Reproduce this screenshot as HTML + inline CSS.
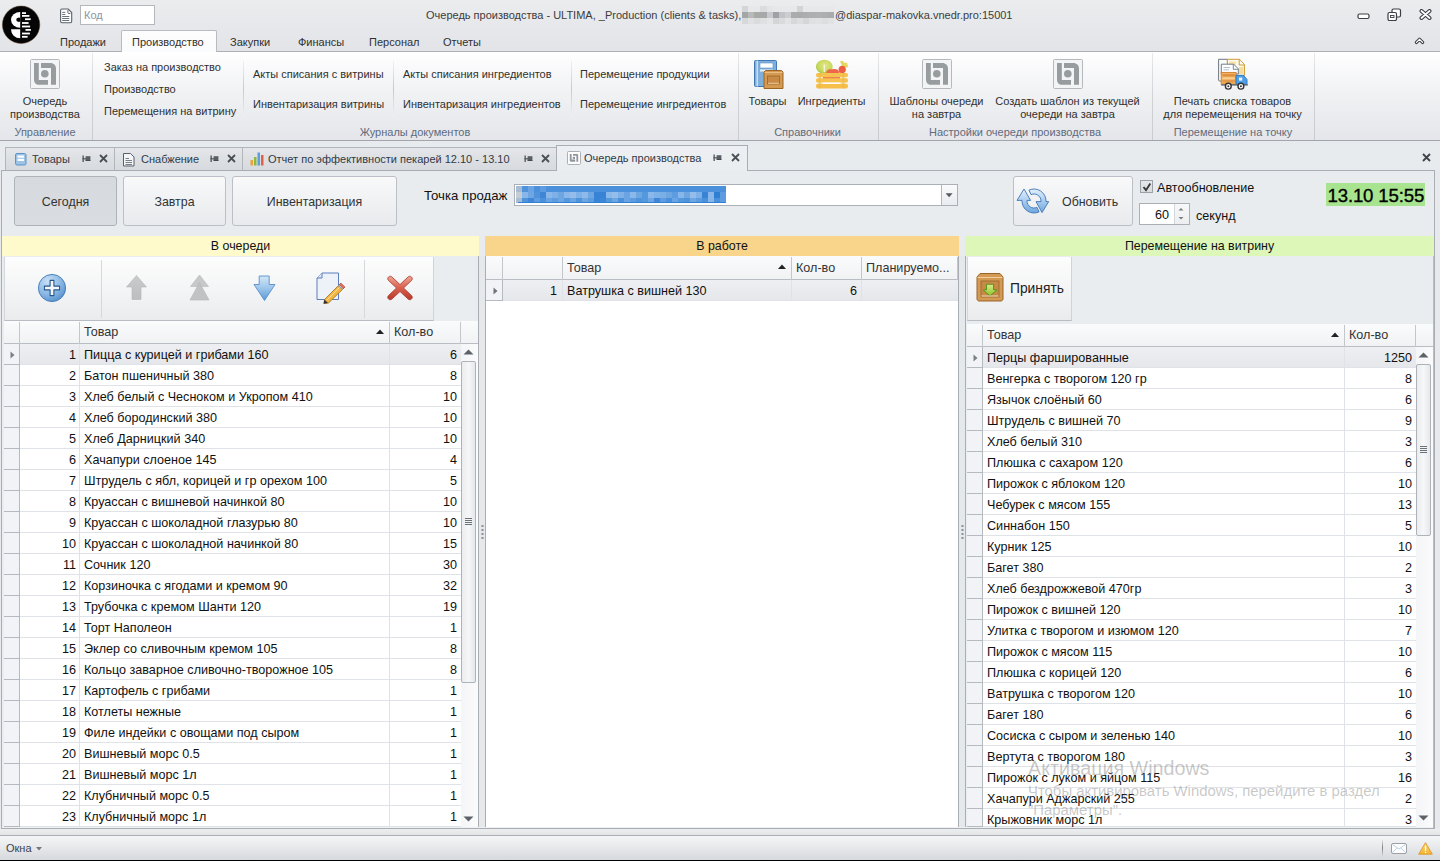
<!DOCTYPE html><html><head><meta charset="utf-8"><style>
html,body{margin:0;padding:0;}
body{width:1440px;height:861px;overflow:hidden;position:relative;font-family:"Liberation Sans", sans-serif;background:#e7e9ec;}
div{box-sizing:border-box;}
</style></head><body>
<div style="position:absolute;left:0px;top:0px;width:1440px;height:52px;background:linear-gradient(#eaecee,#e2e4e8);"></div>
<div style="position:absolute;left:0px;top:51px;width:1440px;height:1px;background:#acb0b6;"></div>
<svg style="position:absolute;left:0px;top:0px" width="44" height="48" viewBox="0 0 44 48"><circle cx="21.1" cy="24.75" r="18.7" fill="#050505" stroke="#5a3e22" stroke-width="0.5"/>
<path d="M20.2 11.9 A9.2 7.95 0 0 0 20.2 27.8 Z" fill="#fff"/>
<circle cx="18.3" cy="19.7" r="2" fill="#050505"/><rect x="18.3" y="17.7" width="2" height="4" fill="#050505"/>
<path d="M20.2 29.3 H11 A9.2 9 0 0 0 20.2 38.3 Z" fill="#fff"/>
<g fill="#fff"><rect x="22" y="12.2" width="4" height="1.8"/><rect x="22" y="15" width="7.4" height="1.8"/><rect x="25" y="18.3" width="5.7" height="1.8"/><rect x="22" y="22.1" width="6.6" height="1.8"/><rect x="22" y="25.6" width="8.1" height="1.8"/><rect x="25.5" y="29" width="5.4" height="1.8"/><rect x="22" y="32.6" width="7.9" height="1.8"/><rect x="22" y="35.9" width="5.6" height="1.8"/></g></svg>
<svg style="position:absolute;left:59px;top:7.6px" width="14" height="16" viewBox="0 0 14 16"><path d="M1.6 2.4 Q1.6 1 3 1 H9.2 L12.7 4.5 V13.3 Q12.7 14.7 11.3 14.7 H3 Q1.6 14.7 1.6 13.3 Z" fill="#fff" stroke="#59616a" stroke-width="1.1"/>
<path d="M8.9 2.2 V4.6 Q8.9 5.5 9.8 5.5 H11.3" fill="none" stroke="#59616a" stroke-width="1"/>
<g stroke="#6a737c" stroke-width="1"><line x1="3.2" y1="4.4" x2="6.3" y2="4.4"/><line x1="3.2" y1="6.5" x2="6.3" y2="6.5"/><line x1="3.2" y1="8.5" x2="10.3" y2="8.5"/><line x1="3.2" y1="10.5" x2="10.3" y2="10.5"/><line x1="3.2" y1="12.5" x2="10.3" y2="12.5"/></g></svg>
<div style="position:absolute;left:80px;top:5px;width:75px;height:20px;background:#fff;border:1px solid #b4b8be;"></div>
<div style="position:absolute;left:84px;top:9.04px;font-size:11px;color:#8c94a6;white-space:nowrap;line-height:normal;">Код</div>
<div style="position:absolute;left:426px;top:9.04px;font-size:11px;color:#3c3c3c;white-space:nowrap;line-height:normal;">Очередь производства - ULTIMA, _Production (clients &amp; tasks), </div>
<div style="position:absolute;left:742.00px;top:6.2px;width:6.43px;height:5.8px;background:#d3d5d7"></div>
<div style="position:absolute;left:748.13px;top:6.2px;width:6.43px;height:5.8px;background:#e6e8ea"></div>
<div style="position:absolute;left:754.27px;top:6.2px;width:6.43px;height:5.8px;background:#e6e8ea"></div>
<div style="position:absolute;left:760.40px;top:6.2px;width:6.43px;height:5.8px;background:#dadcdd"></div>
<div style="position:absolute;left:766.53px;top:6.2px;width:6.43px;height:5.8px;background:#e3e5e7"></div>
<div style="position:absolute;left:772.67px;top:6.2px;width:6.43px;height:5.8px;background:#e6e8ea"></div>
<div style="position:absolute;left:778.80px;top:6.2px;width:6.43px;height:5.8px;background:#e6e8ea"></div>
<div style="position:absolute;left:784.93px;top:6.2px;width:6.43px;height:5.8px;background:#e6e8ea"></div>
<div style="position:absolute;left:791.07px;top:6.2px;width:6.43px;height:5.8px;background:#e6e8ea"></div>
<div style="position:absolute;left:797.20px;top:6.2px;width:6.43px;height:5.8px;background:#d2d4d5"></div>
<div style="position:absolute;left:803.33px;top:6.2px;width:6.43px;height:5.8px;background:#e6e8ea"></div>
<div style="position:absolute;left:809.47px;top:6.2px;width:6.43px;height:5.8px;background:#e6e8ea"></div>
<div style="position:absolute;left:815.60px;top:6.2px;width:6.43px;height:5.8px;background:#e6e8ea"></div>
<div style="position:absolute;left:821.73px;top:6.2px;width:6.43px;height:5.8px;background:#e6e8ea"></div>
<div style="position:absolute;left:827.87px;top:6.2px;width:6.43px;height:5.8px;background:#e6e8ea"></div>
<div style="position:absolute;left:742.00px;top:12px;width:6.43px;height:5.9px;background:#a3a5a7"></div>
<div style="position:absolute;left:748.13px;top:12px;width:6.43px;height:5.9px;background:#b7b9bb"></div>
<div style="position:absolute;left:754.27px;top:12px;width:6.43px;height:5.9px;background:#a9aaa5"></div>
<div style="position:absolute;left:760.40px;top:12px;width:6.43px;height:5.9px;background:#a6a8aa"></div>
<div style="position:absolute;left:766.53px;top:12px;width:6.43px;height:5.9px;background:#c6c9ce"></div>
<div style="position:absolute;left:772.67px;top:12px;width:6.43px;height:5.9px;background:#9fa1a4"></div>
<div style="position:absolute;left:778.80px;top:12px;width:6.43px;height:5.9px;background:#c0c4c8"></div>
<div style="position:absolute;left:784.93px;top:12px;width:6.43px;height:5.9px;background:#cbced0"></div>
<div style="position:absolute;left:791.07px;top:12px;width:6.43px;height:5.9px;background:#aaacae"></div>
<div style="position:absolute;left:797.20px;top:12px;width:6.43px;height:5.9px;background:#a9abad"></div>
<div style="position:absolute;left:803.33px;top:12px;width:6.43px;height:5.9px;background:#abadaf"></div>
<div style="position:absolute;left:809.47px;top:12px;width:6.43px;height:5.9px;background:#adafb1"></div>
<div style="position:absolute;left:815.60px;top:12px;width:6.43px;height:5.9px;background:#aeb0b2"></div>
<div style="position:absolute;left:821.73px;top:12px;width:6.43px;height:5.9px;background:#acaeb0"></div>
<div style="position:absolute;left:827.87px;top:12px;width:6.43px;height:5.9px;background:#a9abad"></div>
<div style="position:absolute;left:742.00px;top:17.9px;width:6.43px;height:5.8px;background:#d6d8da"></div>
<div style="position:absolute;left:748.13px;top:17.9px;width:6.43px;height:5.8px;background:#dfe1e3"></div>
<div style="position:absolute;left:754.27px;top:17.9px;width:6.43px;height:5.8px;background:#d9dbdd"></div>
<div style="position:absolute;left:760.40px;top:17.9px;width:6.43px;height:5.8px;background:#dee0e2"></div>
<div style="position:absolute;left:766.53px;top:17.9px;width:6.43px;height:5.8px;background:#e3e5e7"></div>
<div style="position:absolute;left:772.67px;top:17.9px;width:6.43px;height:5.8px;background:#d3d5d7"></div>
<div style="position:absolute;left:778.80px;top:17.9px;width:6.43px;height:5.8px;background:#d9dbdd"></div>
<div style="position:absolute;left:784.93px;top:17.9px;width:6.43px;height:5.8px;background:#e1e3e5"></div>
<div style="position:absolute;left:791.07px;top:17.9px;width:6.43px;height:5.8px;background:#d6d8da"></div>
<div style="position:absolute;left:797.20px;top:17.9px;width:6.43px;height:5.8px;background:#dcdee0"></div>
<div style="position:absolute;left:803.33px;top:17.9px;width:6.43px;height:5.8px;background:#d4d6d8"></div>
<div style="position:absolute;left:809.47px;top:17.9px;width:6.43px;height:5.8px;background:#dee0e2"></div>
<div style="position:absolute;left:815.60px;top:17.9px;width:6.43px;height:5.8px;background:#e0e2e4"></div>
<div style="position:absolute;left:821.73px;top:17.9px;width:6.43px;height:5.8px;background:#dcdee0"></div>
<div style="position:absolute;left:827.87px;top:17.9px;width:6.43px;height:5.8px;background:#e0e2e4"></div>
<div style="position:absolute;left:835px;top:9.04px;font-size:11px;color:#3c3c3c;white-space:nowrap;line-height:normal;">@diaspar-makovka.vnedr.pro:15001</div>
<svg style="position:absolute;left:1357px;top:13px" width="13" height="7" viewBox="0 0 13 7"><rect x="1" y="1" width="11" height="4.5" rx="1.5" fill="#fff" stroke="#3a3f45" stroke-width="1.2"/></svg>
<svg style="position:absolute;left:1387px;top:8px" width="15" height="13" viewBox="0 0 15 13"><rect x="5" y="1" width="8.5" height="8" rx="1.5" fill="#fff" stroke="#3a3f45" stroke-width="1.2"/><rect x="1" y="4.5" width="8.5" height="8" rx="1.5" fill="#fff" stroke="#3a3f45" stroke-width="1.2"/><rect x="3.5" y="7.5" width="3.5" height="2" fill="none" stroke="#3a3f45" stroke-width="0.9"/></svg>
<svg style="position:absolute;left:1419px;top:9px" width="13" height="11" viewBox="0 0 13 11"><path d="M2.5 2 L6.5 5.5 L10.5 2 M2.5 9 L6.5 5.5 L10.5 9" stroke="#3a3f45" stroke-width="4" stroke-linecap="round" stroke-linejoin="round" fill="none"/><path d="M2.5 2 L6.5 5.5 L10.5 2 M2.5 9 L6.5 5.5 L10.5 9" stroke="#fff" stroke-width="1.8" stroke-linecap="round" fill="none"/></svg>
<svg style="position:absolute;left:1414px;top:36px" width="11" height="9" viewBox="0 0 11 9"><path d="M2.4 6.4 L5.5 3.3 L8.6 6.4" stroke="#3a3f45" stroke-width="3.3" stroke-linecap="round" stroke-linejoin="round" fill="none"/><path d="M2.4 6.4 L5.5 3.3 L8.6 6.4" stroke="#fff" stroke-width="1.2" stroke-linecap="round" fill="none"/></svg>
<div style="position:absolute;left:121px;top:30px;width:96px;height:23px;background:linear-gradient(#fdfdfd,#fafbfc);border:1px solid #b8bcc2;border-bottom:none;border-radius:2px 2px 0 0;"></div>
<div style="position:absolute;left:60px;top:36.05px;font-size:11px;color:#303030;white-space:nowrap;line-height:normal;">Продажи</div>
<div style="position:absolute;left:132px;top:36.05px;font-size:11px;color:#303030;white-space:nowrap;line-height:normal;">Производство</div>
<div style="position:absolute;left:230px;top:36.05px;font-size:11px;color:#303030;white-space:nowrap;line-height:normal;">Закупки</div>
<div style="position:absolute;left:298px;top:36.05px;font-size:11px;color:#303030;white-space:nowrap;line-height:normal;">Финансы</div>
<div style="position:absolute;left:369px;top:36.05px;font-size:11px;color:#303030;white-space:nowrap;line-height:normal;">Персонал</div>
<div style="position:absolute;left:443px;top:36.05px;font-size:11px;color:#303030;white-space:nowrap;line-height:normal;">Отчеты</div>
<div style="position:absolute;left:0px;top:52px;width:1440px;height:89px;background:linear-gradient(#ffffff 0%,#fbfbfc 12%,#f1f2f4 45%,#e9ebee 75%,#e4e6e9 100%);"></div>
<div style="position:absolute;left:0px;top:140px;width:1440px;height:1px;background:#a2a6ac;"></div>
<div style="position:absolute;left:92px;top:53px;width:1px;height:87px;background:linear-gradient(#e6e8ea,#cfd3d7 50%,#c8ccd1);"></div>
<div style="position:absolute;left:738px;top:53px;width:1px;height:87px;background:linear-gradient(#e6e8ea,#cfd3d7 50%,#c8ccd1);"></div>
<div style="position:absolute;left:878px;top:53px;width:1px;height:87px;background:linear-gradient(#e6e8ea,#cfd3d7 50%,#c8ccd1);"></div>
<div style="position:absolute;left:1152px;top:53px;width:1px;height:87px;background:linear-gradient(#e6e8ea,#cfd3d7 50%,#c8ccd1);"></div>
<div style="position:absolute;left:1314px;top:53px;width:1px;height:87px;background:linear-gradient(#e6e8ea,#cfd3d7 50%,#c8ccd1);"></div>
<svg style="position:absolute;left:30px;top:59px" width="30" height="30" viewBox="0 0 30 30"><rect x="0.5" y="0.5" width="29" height="29" rx="1" fill="#f3f4f5" stroke="#b5b9be"/>
<path d="M4 4 H8.8 V21 H18 V25.8 H9 C6 25.8 4 23.8 4 20.5 Z" fill="#979c9f"/>
<path d="M11 4 H20.5 C23.5 4 26 6.3 26 9.5 V25.8 H21 V9 H11 Z" fill="#979c9f"/>
<circle cx="14.8" cy="14.8" r="3.8" fill="#979c9f"/></svg>
<div style="position:absolute;left:-255px;width:600px;top:95.05px;font-size:11px;color:#303030;white-space:nowrap;line-height:normal;text-align:center;">Очередь</div>
<div style="position:absolute;left:-255px;width:600px;top:108.05px;font-size:11px;color:#303030;white-space:nowrap;line-height:normal;text-align:center;">производства</div>
<div style="position:absolute;left:-255px;width:600px;top:126.05px;font-size:11px;color:#5f6b7e;white-space:nowrap;line-height:normal;text-align:center;">Управление</div>
<div style="position:absolute;left:104px;top:61.05px;font-size:11px;color:#303030;white-space:nowrap;line-height:normal;">Заказ на производство</div>
<div style="position:absolute;left:104px;top:83.05px;font-size:11px;color:#303030;white-space:nowrap;line-height:normal;">Производство</div>
<div style="position:absolute;left:104px;top:105.05px;font-size:11px;color:#303030;white-space:nowrap;line-height:normal;">Перемещения на витрину</div>
<div style="position:absolute;left:243px;top:61px;width:1px;height:56px;background:linear-gradient(#f0f1f2,#c5c9cd 50%,#f0f1f2);"></div>
<div style="position:absolute;left:253px;top:68.05px;font-size:11px;color:#303030;white-space:nowrap;line-height:normal;">Акты списания с витрины</div>
<div style="position:absolute;left:253px;top:98.05px;font-size:11px;color:#303030;white-space:nowrap;line-height:normal;">Инвентаризация витрины</div>
<div style="position:absolute;left:393px;top:61px;width:1px;height:56px;background:linear-gradient(#f0f1f2,#c5c9cd 50%,#f0f1f2);"></div>
<div style="position:absolute;left:403px;top:68.05px;font-size:11px;color:#303030;white-space:nowrap;line-height:normal;">Акты списания ингредиентов</div>
<div style="position:absolute;left:403px;top:98.05px;font-size:11px;color:#303030;white-space:nowrap;line-height:normal;">Инвентаризация ингредиентов</div>
<div style="position:absolute;left:571px;top:61px;width:1px;height:56px;background:linear-gradient(#f0f1f2,#c5c9cd 50%,#f0f1f2);"></div>
<div style="position:absolute;left:580px;top:68.05px;font-size:11px;color:#303030;white-space:nowrap;line-height:normal;">Перемещение продукции</div>
<div style="position:absolute;left:580px;top:98.05px;font-size:11px;color:#303030;white-space:nowrap;line-height:normal;">Перемещение ингредиентов</div>
<div style="position:absolute;left:115px;width:600px;top:126.05px;font-size:11px;color:#5f6b7e;white-space:nowrap;line-height:normal;text-align:center;">Журналы документов</div>
<svg style="position:absolute;left:753px;top:59px" width="31" height="31" viewBox="0 0 31 31"><rect x="1.5" y="1.5" width="22" height="26" rx="1" fill="#7fb0dc" stroke="#3f78b5"/>
<rect x="3.5" y="1.5" width="1.5" height="26" fill="#c9def2"/>
<rect x="7" y="4" width="13" height="5" fill="#fff" stroke="#5b90c6" stroke-width="0.6"/>
<rect x="7" y="10.5" width="13" height="2" fill="#e7f0f9"/>
<path d="M11 13 L12.5 11.5 H28.5 L30 13 V29.5 H11 Z" fill="#d49a52" stroke="#9c6526"/>
<rect x="14.5" y="17" width="12" height="8" fill="#c98a45" stroke="#9c6526" stroke-width="0.8"/>
<line x1="15" y1="24.3" x2="26" y2="24.3" stroke="#f7e3c2" stroke-width="0.8"/>
<line x1="11.5" y1="13.5" x2="29.5" y2="13.5" stroke="#f0c890" stroke-width="0.8"/></svg>
<svg style="position:absolute;left:812px;top:56px" width="40" height="36" viewBox="0 0 40 36"><defs><radialGradient id="cab" cx="0.55" cy="0.4" r="0.7"><stop offset="0" stop-color="#e3e58a"/><stop offset="0.6" stop-color="#c8d95c"/><stop offset="1" stop-color="#8fbd3c"/></radialGradient></defs>
<ellipse cx="12.3" cy="10.8" rx="8.4" ry="7" fill="url(#cab)"/>
<rect x="11.6" y="8.5" width="1.4" height="7.5" fill="#f4f5dc"/>
<path d="M28 5.5 C30 4 32 5 32 7 C34 5.5 36 7 35.5 9 C37 10 36 12 34 11.5 L31 12 Z" fill="#e5d760"/>
<path d="M14 17.5 C14.5 14 17 12.8 19 13.5 C21 12.5 24 13 26 14 L28 17.5 Z" fill="#ee6749"/>
<ellipse cx="30.2" cy="13.5" rx="3.6" ry="3.8" fill="#ec5d44"/>
<rect x="11" y="20" width="17" height="3" fill="#ef6b4b"/>
<rect x="4" y="17" width="32" height="4.2" rx="1.6" fill="#f6c250"/>
<rect x="4" y="22.2" width="32" height="4.4" rx="1.6" fill="#f6c250"/>
<rect x="4" y="27.8" width="32" height="4.6" rx="1.8" fill="#f5bf4a"/>
<rect x="11" y="26.6" width="17" height="1.2" fill="#ffffff"/>
<rect x="6.5" y="17" width="2.5" height="15.4" fill="#eeb844" opacity="0.6"/><rect x="30" y="17" width="2.5" height="15.4" fill="#eeb844" opacity="0.6"/></svg>
<div style="position:absolute;left:467.5px;width:600px;top:95.05px;font-size:11px;color:#303030;white-space:nowrap;line-height:normal;text-align:center;">Товары</div>
<div style="position:absolute;left:531.5px;width:600px;top:95.05px;font-size:11px;color:#303030;white-space:nowrap;line-height:normal;text-align:center;">Ингредиенты</div>
<div style="position:absolute;left:507.5px;width:600px;top:126.05px;font-size:11px;color:#5f6b7e;white-space:nowrap;line-height:normal;text-align:center;">Справочники</div>
<svg style="position:absolute;left:922px;top:59px" width="30" height="30" viewBox="0 0 30 30"><rect x="0.5" y="0.5" width="29" height="29" rx="1" fill="#f3f4f5" stroke="#b5b9be"/>
<path d="M4 4 H8.8 V21 H18 V25.8 H9 C6 25.8 4 23.8 4 20.5 Z" fill="#979c9f"/>
<path d="M11 4 H20.5 C23.5 4 26 6.3 26 9.5 V25.8 H21 V9 H11 Z" fill="#979c9f"/>
<circle cx="14.8" cy="14.8" r="3.8" fill="#979c9f"/></svg>
<svg style="position:absolute;left:1053px;top:59px" width="30" height="30" viewBox="0 0 30 30"><rect x="0.5" y="0.5" width="29" height="29" rx="1" fill="#f3f4f5" stroke="#b5b9be"/>
<path d="M4 4 H8.8 V21 H18 V25.8 H9 C6 25.8 4 23.8 4 20.5 Z" fill="#979c9f"/>
<path d="M11 4 H20.5 C23.5 4 26 6.3 26 9.5 V25.8 H21 V9 H11 Z" fill="#979c9f"/>
<circle cx="14.8" cy="14.8" r="3.8" fill="#979c9f"/></svg>
<div style="position:absolute;left:636.5px;width:600px;top:95.05px;font-size:11px;color:#303030;white-space:nowrap;line-height:normal;text-align:center;">Шаблоны очереди</div>
<div style="position:absolute;left:636.5px;width:600px;top:108.05px;font-size:11px;color:#303030;white-space:nowrap;line-height:normal;text-align:center;">на завтра</div>
<div style="position:absolute;left:767.5px;width:600px;top:95.05px;font-size:11px;color:#303030;white-space:nowrap;line-height:normal;text-align:center;">Создать шаблон из текущей</div>
<div style="position:absolute;left:767.5px;width:600px;top:108.05px;font-size:11px;color:#303030;white-space:nowrap;line-height:normal;text-align:center;">очереди на завтра</div>
<div style="position:absolute;left:715px;width:600px;top:126.05px;font-size:11px;color:#5f6b7e;white-space:nowrap;line-height:normal;text-align:center;">Настройки очереди производства</div>
<svg style="position:absolute;left:1210px;top:55px" width="45" height="37" viewBox="0 0 45 37"><path d="M8.6 4.3 H17.5 V26 H9.5 C9 26 8.6 25.6 8.6 25 Z" fill="#fafbfc" stroke="#5f6670" stroke-width="0.9"/>
<path d="M17.3 4.3 H29.5 L34.4 9.4 V20.5 H17.3 Z" fill="#fffaf0" stroke="#c7901e" stroke-width="0.9"/>
<path d="M29.2 4.6 V10 H34.2" fill="none" stroke="#c7901e" stroke-width="0.9"/>
<rect x="19" y="6.5" width="7" height="3.5" fill="#fbe2a6"/>
<rect x="29" y="12" width="4.5" height="7" fill="#f8dc9c"/>
<path d="M11.3 9.2 H23.7 L28.3 13.8 V19 H11.3 Z" fill="#ffffff" stroke="#5d6d80" stroke-width="0.9"/>
<path d="M23.3 9.5 V14.3 H28" fill="none" stroke="#5d6d80" stroke-width="0.8"/>
<g stroke="#9ab0c8" stroke-width="0.8"><line x1="13.5" y1="12.5" x2="20" y2="12.5"/><line x1="13.5" y1="14.8" x2="19" y2="14.8"/></g>
<rect x="11.2" y="17.4" width="14.8" height="11.8" fill="#f2b463" stroke="#cf7d2a" stroke-width="0.9"/>
<rect x="12.5" y="19.2" width="12.2" height="2.2" fill="#dc8c3c"/>
<rect x="12.5" y="22.5" width="12.2" height="1.6" fill="#f7d09a"/>
<rect x="12.5" y="25" width="12.2" height="2.5" fill="#e49848"/>
<path d="M26 20.3 H33.5 L37 24.5 V29.4 H26 Z" fill="#4f9fe6" stroke="#2a74c0" stroke-width="0.9"/>
<rect x="29" y="22.6" width="3.2" height="3" fill="#eef6fd"/>
<rect x="11.2" y="29.2" width="26.6" height="1.4" fill="#5d6570"/>
<circle cx="18.3" cy="31.2" r="2.9" fill="#fff" stroke="#333" stroke-width="1.4"/><circle cx="18.3" cy="31.2" r="1" fill="#333"/>
<circle cx="30.9" cy="31.2" r="2.9" fill="#fff" stroke="#333" stroke-width="1.4"/><circle cx="30.9" cy="31.2" r="1" fill="#333"/></svg>
<div style="position:absolute;left:932.5px;width:600px;top:95.05px;font-size:11px;color:#303030;white-space:nowrap;line-height:normal;text-align:center;">Печать списка товаров</div>
<div style="position:absolute;left:932.5px;width:600px;top:108.05px;font-size:11px;color:#303030;white-space:nowrap;line-height:normal;text-align:center;">для перемещения на точку</div>
<div style="position:absolute;left:933px;width:600px;top:126.05px;font-size:11px;color:#5f6b7e;white-space:nowrap;line-height:normal;text-align:center;">Перемещение на точку</div>
<div style="position:absolute;left:0px;top:141px;width:1440px;height:30px;background:#e8ebee;"></div>
<div style="position:absolute;left:5px;top:147px;width:110px;height:24px;background:linear-gradient(#e4e6e9,#d6d9dd);border:1px solid #b1b6bc;border-bottom:none;"></div>
<div style="position:absolute;left:114px;top:147px;width:129px;height:24px;background:linear-gradient(#e4e6e9,#d6d9dd);border:1px solid #b1b6bc;border-bottom:none;"></div>
<div style="position:absolute;left:242px;top:147px;width:315px;height:24px;background:linear-gradient(#e4e6e9,#d6d9dd);border:1px solid #b1b6bc;border-bottom:none;"></div>
<div style="position:absolute;left:556px;top:145px;width:192px;height:27px;background:linear-gradient(#edeff2,#eaedf0);border:1px solid #a9aeb5;border-bottom:none;"></div>
<svg style="position:absolute;left:15px;top:153px" width="12" height="13" viewBox="0 0 12 13"><rect x="0.5" y="0.5" width="10.5" height="11.5" rx="1.5" fill="#9cc3e6" stroke="#5d93c8"/><rect x="2.5" y="2.5" width="6.5" height="2.2" fill="#fff"/><rect x="2.5" y="5.8" width="6.5" height="2.2" fill="#fff"/></svg>
<div style="position:absolute;left:32px;top:153.04px;font-size:11px;color:#303a48;white-space:nowrap;line-height:normal;">Товары</div>
<svg style="position:absolute;left:123px;top:153px" width="12" height="14" viewBox="0 0 12 14"><path d="M0.5 0.5 H7.5 L11 4 V13 H0.5 Z" fill="#f4f5f6" stroke="#5a6068"/><g stroke="#6a7078" stroke-width="0.9"><line x1="2.5" y1="5.5" x2="6" y2="5.5"/><line x1="2.5" y1="7.5" x2="9" y2="7.5"/><line x1="2.5" y1="9.5" x2="9" y2="9.5"/><line x1="2.5" y1="11.5" x2="9" y2="11.5"/></g></svg>
<div style="position:absolute;left:141px;top:153.04px;font-size:11px;color:#303a48;white-space:nowrap;line-height:normal;">Снабжение</div>
<svg style="position:absolute;left:250px;top:152px" width="15" height="14" viewBox="0 0 15 14"><rect x="0.5" y="8" width="2.5" height="5.5" fill="#f0a040"/><rect x="4" y="5" width="2.5" height="8.5" fill="#8fb840"/><rect x="7.5" y="0.5" width="2.5" height="13" fill="#5aa0e0"/><rect x="11" y="3" width="2.5" height="10.5" fill="#e0604a"/></svg>
<div style="position:absolute;left:268px;top:153.04px;font-size:11px;color:#303a48;white-space:nowrap;line-height:normal;">Отчет по эффективности пекарей 12.10 - 13.10</div>
<svg style="position:absolute;left:567px;top:151px" width="14" height="14" viewBox="0 0 14 14"><rect x="0.5" y="0.5" width="13" height="13" rx="1" fill="#fdfdfd" stroke="#aab0b5"/><path d="M2.8 3 H4.6 V8.6 H8.2 V10.8 H4 C3.3 10.8 2.8 10.3 2.8 9.6 Z" fill="#8f969b"/><path d="M6 3 H10 C10.7 3 11.2 3.5 11.2 4.2 V10.8 H9.4 V4.8 H6 Z" fill="#8f969b"/><rect x="5.8" y="5.8" width="2.2" height="2.2" fill="#8f969b"/></svg>
<div style="position:absolute;left:584px;top:152.04px;font-size:11px;color:#303a48;white-space:nowrap;line-height:normal;">Очередь производства</div>
<svg style="position:absolute;left:82px;top:155px" width="9" height="8" viewBox="0 0 9 8"><rect x="0.5" y="0.5" width="1.3" height="6.5" fill="#4f545a"/><rect x="0.5" y="3.2" width="3.5" height="1.2" fill="#4f545a"/><rect x="3.6" y="1.2" width="4.8" height="4.6" fill="#5a5f66"/><rect x="3.6" y="5" width="4.8" height="0.9" fill="#3f444a"/></svg>
<svg style="position:absolute;left:99px;top:154px" width="9" height="9" viewBox="0 0 9 9"><path d="M1 1 L8 8 M8 1 L1 8" stroke="#4a4f55" stroke-width="1.8"/></svg>
<svg style="position:absolute;left:210px;top:155px" width="9" height="8" viewBox="0 0 9 8"><rect x="0.5" y="0.5" width="1.3" height="6.5" fill="#4f545a"/><rect x="0.5" y="3.2" width="3.5" height="1.2" fill="#4f545a"/><rect x="3.6" y="1.2" width="4.8" height="4.6" fill="#5a5f66"/><rect x="3.6" y="5" width="4.8" height="0.9" fill="#3f444a"/></svg>
<svg style="position:absolute;left:227px;top:154px" width="9" height="9" viewBox="0 0 9 9"><path d="M1 1 L8 8 M8 1 L1 8" stroke="#4a4f55" stroke-width="1.8"/></svg>
<svg style="position:absolute;left:524px;top:155px" width="9" height="8" viewBox="0 0 9 8"><rect x="0.5" y="0.5" width="1.3" height="6.5" fill="#4f545a"/><rect x="0.5" y="3.2" width="3.5" height="1.2" fill="#4f545a"/><rect x="3.6" y="1.2" width="4.8" height="4.6" fill="#5a5f66"/><rect x="3.6" y="5" width="4.8" height="0.9" fill="#3f444a"/></svg>
<svg style="position:absolute;left:541px;top:154px" width="9" height="9" viewBox="0 0 9 9"><path d="M1 1 L8 8 M8 1 L1 8" stroke="#4a4f55" stroke-width="1.8"/></svg>
<svg style="position:absolute;left:713px;top:154px" width="9" height="8" viewBox="0 0 9 8"><rect x="0.5" y="0.5" width="1.3" height="6.5" fill="#4f545a"/><rect x="0.5" y="3.2" width="3.5" height="1.2" fill="#4f545a"/><rect x="3.6" y="1.2" width="4.8" height="4.6" fill="#5a5f66"/><rect x="3.6" y="5" width="4.8" height="0.9" fill="#3f444a"/></svg>
<svg style="position:absolute;left:731px;top:153px" width="9" height="9" viewBox="0 0 9 9"><path d="M1 1 L8 8 M8 1 L1 8" stroke="#4a4f55" stroke-width="1.8"/></svg>
<svg style="position:absolute;left:1422px;top:153px" width="9" height="9" viewBox="0 0 9 9"><path d="M1 1 L8 8 M8 1 L1 8" stroke="#3f444a" stroke-width="1.8"/></svg>
<div style="position:absolute;left:1px;top:170px;width:1434px;height:659px;background:#e9ecef;border:1px solid #a9aeb5;"></div>
<div style="position:absolute;left:557px;top:170px;width:190px;height:1px;background:#eaedf0;"></div>
<div style="position:absolute;left:14px;top:176px;width:103px;height:50px;background:linear-gradient(#d6d9dd,#d9dce0);border:1px solid #aeb3b9;border-radius:3px;"></div>
<div style="position:absolute;left:123px;top:176px;width:103px;height:50px;background:linear-gradient(#f9f9fa,#eef0f2 60%,#e8eaed);border:1px solid #bcc0c6;border-radius:3px;"></div>
<div style="position:absolute;left:232px;top:176px;width:165px;height:50px;background:linear-gradient(#f9f9fa,#eef0f2 60%,#e8eaed);border:1px solid #bcc0c6;border-radius:3px;"></div>
<div style="position:absolute;left:-234.5px;width:600px;top:194.78px;font-size:12.4px;color:#333;white-space:nowrap;line-height:normal;text-align:center;">Сегодня</div>
<div style="position:absolute;left:-125.5px;width:600px;top:194.78px;font-size:12.4px;color:#333;white-space:nowrap;line-height:normal;text-align:center;">Завтра</div>
<div style="position:absolute;left:14.5px;width:600px;top:194.78px;font-size:12.4px;color:#333;white-space:nowrap;line-height:normal;text-align:center;">Инвентаризация</div>
<div style="position:absolute;left:424px;top:188.05px;font-size:13.2px;color:#111;white-space:nowrap;line-height:normal;">Точка продаж</div>
<div style="position:absolute;left:514px;top:184px;width:444px;height:22px;background:#fff;border:1px solid #abb0b6;"></div>
<div style="position:absolute;left:941px;top:185px;width:16px;height:20px;background:linear-gradient(#fafbfc,#e9ecef);border-left:1px solid #b3b8be;"></div>
<svg style="position:absolute;left:945px;top:193px" width="9" height="5" viewBox="0 0 9 5"><path d="M0.6 0.3 H7.6 L4.1 4.2 Z" fill="#555a61"/></svg>
<div style="position:absolute;left:516.00px;top:186px;width:6.30px;height:5.5px;background:#a8bdd3"></div>
<div style="position:absolute;left:522.00px;top:186px;width:6.30px;height:5.5px;background:#4f93db"></div>
<div style="position:absolute;left:528.00px;top:186px;width:6.30px;height:5.5px;background:#6aa4e3"></div>
<div style="position:absolute;left:534.00px;top:186px;width:6.30px;height:5.5px;background:#4a90da"></div>
<div style="position:absolute;left:540.00px;top:186px;width:6.30px;height:5.5px;background:#5d9ce0"></div>
<div style="position:absolute;left:546.00px;top:186px;width:6.30px;height:5.5px;background:#4a90da"></div>
<div style="position:absolute;left:552.00px;top:186px;width:6.30px;height:5.5px;background:#4a90da"></div>
<div style="position:absolute;left:558.00px;top:186px;width:6.30px;height:5.5px;background:#4a90da"></div>
<div style="position:absolute;left:564.00px;top:186px;width:6.30px;height:5.5px;background:#4a90da"></div>
<div style="position:absolute;left:570.00px;top:186px;width:6.30px;height:5.5px;background:#4a90da"></div>
<div style="position:absolute;left:576.00px;top:186px;width:6.30px;height:5.5px;background:#4a90da"></div>
<div style="position:absolute;left:582.00px;top:186px;width:6.30px;height:5.5px;background:#4a90da"></div>
<div style="position:absolute;left:588.00px;top:186px;width:6.30px;height:5.5px;background:#4a90da"></div>
<div style="position:absolute;left:594.00px;top:186px;width:6.30px;height:5.5px;background:#4a90da"></div>
<div style="position:absolute;left:600.00px;top:186px;width:6.30px;height:5.5px;background:#4a90da"></div>
<div style="position:absolute;left:606.00px;top:186px;width:6.30px;height:5.5px;background:#4a90da"></div>
<div style="position:absolute;left:612.00px;top:186px;width:6.30px;height:5.5px;background:#4a90da"></div>
<div style="position:absolute;left:618.00px;top:186px;width:6.30px;height:5.5px;background:#4a90da"></div>
<div style="position:absolute;left:624.00px;top:186px;width:6.30px;height:5.5px;background:#4a90da"></div>
<div style="position:absolute;left:630.00px;top:186px;width:6.30px;height:5.5px;background:#4a90da"></div>
<div style="position:absolute;left:636.00px;top:186px;width:6.30px;height:5.5px;background:#4a90da"></div>
<div style="position:absolute;left:642.00px;top:186px;width:6.30px;height:5.5px;background:#4a90da"></div>
<div style="position:absolute;left:648.00px;top:186px;width:6.30px;height:5.5px;background:#4a90da"></div>
<div style="position:absolute;left:654.00px;top:186px;width:6.30px;height:5.5px;background:#4a90da"></div>
<div style="position:absolute;left:660.00px;top:186px;width:6.30px;height:5.5px;background:#4a90da"></div>
<div style="position:absolute;left:666.00px;top:186px;width:6.30px;height:5.5px;background:#4a90da"></div>
<div style="position:absolute;left:672.00px;top:186px;width:6.30px;height:5.5px;background:#4a90da"></div>
<div style="position:absolute;left:678.00px;top:186px;width:6.30px;height:5.5px;background:#4a90da"></div>
<div style="position:absolute;left:684.00px;top:186px;width:6.30px;height:5.5px;background:#4a90da"></div>
<div style="position:absolute;left:690.00px;top:186px;width:6.30px;height:5.5px;background:#4a90da"></div>
<div style="position:absolute;left:696.00px;top:186px;width:6.30px;height:5.5px;background:#4a90da"></div>
<div style="position:absolute;left:702.00px;top:186px;width:6.30px;height:5.5px;background:#4a90da"></div>
<div style="position:absolute;left:708.00px;top:186px;width:6.30px;height:5.5px;background:#4a90da"></div>
<div style="position:absolute;left:714.00px;top:186px;width:6.30px;height:5.5px;background:#4a90da"></div>
<div style="position:absolute;left:720.00px;top:186px;width:6.30px;height:5.5px;background:#4a90da"></div>
<div style="position:absolute;left:516.00px;top:191.5px;width:6.30px;height:6px;background:#c4ccd4"></div>
<div style="position:absolute;left:522.00px;top:191.5px;width:6.30px;height:6px;background:#86b6ea"></div>
<div style="position:absolute;left:528.00px;top:191.5px;width:6.30px;height:6px;background:#6ea6e2"></div>
<div style="position:absolute;left:534.00px;top:191.5px;width:6.30px;height:6px;background:#4f93db"></div>
<div style="position:absolute;left:540.00px;top:191.5px;width:6.30px;height:6px;background:#3f87d6"></div>
<div style="position:absolute;left:546.00px;top:191.5px;width:6.30px;height:6px;background:#8ab8ea"></div>
<div style="position:absolute;left:552.00px;top:191.5px;width:6.30px;height:6px;background:#7eb1e8"></div>
<div style="position:absolute;left:558.00px;top:191.5px;width:6.30px;height:6px;background:#6ea6e2"></div>
<div style="position:absolute;left:564.00px;top:191.5px;width:6.30px;height:6px;background:#8ab8ea"></div>
<div style="position:absolute;left:570.00px;top:191.5px;width:6.30px;height:6px;background:#94bdec"></div>
<div style="position:absolute;left:576.00px;top:191.5px;width:6.30px;height:6px;background:#7eb1e8"></div>
<div style="position:absolute;left:582.00px;top:191.5px;width:6.30px;height:6px;background:#8ebaeb"></div>
<div style="position:absolute;left:588.00px;top:191.5px;width:6.30px;height:6px;background:#6ea6e2"></div>
<div style="position:absolute;left:594.00px;top:191.5px;width:6.30px;height:6px;background:#3783d5"></div>
<div style="position:absolute;left:600.00px;top:191.5px;width:6.30px;height:6px;background:#3783d5"></div>
<div style="position:absolute;left:606.00px;top:191.5px;width:6.30px;height:6px;background:#8ab8ea"></div>
<div style="position:absolute;left:612.00px;top:191.5px;width:6.30px;height:6px;background:#94bdec"></div>
<div style="position:absolute;left:618.00px;top:191.5px;width:6.30px;height:6px;background:#7eb1e8"></div>
<div style="position:absolute;left:624.00px;top:191.5px;width:6.30px;height:6px;background:#6aa4e3"></div>
<div style="position:absolute;left:630.00px;top:191.5px;width:6.30px;height:6px;background:#8ab8ea"></div>
<div style="position:absolute;left:636.00px;top:191.5px;width:6.30px;height:6px;background:#6ea6e2"></div>
<div style="position:absolute;left:642.00px;top:191.5px;width:6.30px;height:6px;background:#5399dd"></div>
<div style="position:absolute;left:648.00px;top:191.5px;width:6.30px;height:6px;background:#8ab8ea"></div>
<div style="position:absolute;left:654.00px;top:191.5px;width:6.30px;height:6px;background:#7eb1e8"></div>
<div style="position:absolute;left:660.00px;top:191.5px;width:6.30px;height:6px;background:#7aaee7"></div>
<div style="position:absolute;left:666.00px;top:191.5px;width:6.30px;height:6px;background:#6ea6e2"></div>
<div style="position:absolute;left:672.00px;top:191.5px;width:6.30px;height:6px;background:#5d9ce0"></div>
<div style="position:absolute;left:678.00px;top:191.5px;width:6.30px;height:6px;background:#86b6ea"></div>
<div style="position:absolute;left:684.00px;top:191.5px;width:6.30px;height:6px;background:#6ea6e2"></div>
<div style="position:absolute;left:690.00px;top:191.5px;width:6.30px;height:6px;background:#94bdec"></div>
<div style="position:absolute;left:696.00px;top:191.5px;width:6.30px;height:6px;background:#7eb1e8"></div>
<div style="position:absolute;left:702.00px;top:191.5px;width:6.30px;height:6px;background:#3783d5"></div>
<div style="position:absolute;left:708.00px;top:191.5px;width:6.30px;height:6px;background:#8ab8ea"></div>
<div style="position:absolute;left:714.00px;top:191.5px;width:6.30px;height:6px;background:#2f7fd3"></div>
<div style="position:absolute;left:720.00px;top:191.5px;width:6.30px;height:6px;background:#5d9ce0"></div>
<div style="position:absolute;left:516.00px;top:197.5px;width:6.30px;height:5.3px;background:#a8bdd3"></div>
<div style="position:absolute;left:522.00px;top:197.5px;width:6.30px;height:5.3px;background:#4f93db"></div>
<div style="position:absolute;left:528.00px;top:197.5px;width:6.30px;height:5.3px;background:#3f87d6"></div>
<div style="position:absolute;left:534.00px;top:197.5px;width:6.30px;height:5.3px;background:#5d9ce0"></div>
<div style="position:absolute;left:540.00px;top:197.5px;width:6.30px;height:5.3px;background:#4a90da"></div>
<div style="position:absolute;left:546.00px;top:197.5px;width:6.30px;height:5.3px;background:#6aa4e3"></div>
<div style="position:absolute;left:552.00px;top:197.5px;width:6.30px;height:5.3px;background:#5d9ce0"></div>
<div style="position:absolute;left:558.00px;top:197.5px;width:6.30px;height:5.3px;background:#6ea6e2"></div>
<div style="position:absolute;left:564.00px;top:197.5px;width:6.30px;height:5.3px;background:#5399dd"></div>
<div style="position:absolute;left:570.00px;top:197.5px;width:6.30px;height:5.3px;background:#6aa4e3"></div>
<div style="position:absolute;left:576.00px;top:197.5px;width:6.30px;height:5.3px;background:#4f93db"></div>
<div style="position:absolute;left:582.00px;top:197.5px;width:6.30px;height:5.3px;background:#6ea6e2"></div>
<div style="position:absolute;left:588.00px;top:197.5px;width:6.30px;height:5.3px;background:#5d9ce0"></div>
<div style="position:absolute;left:594.00px;top:197.5px;width:6.30px;height:5.3px;background:#3783d5"></div>
<div style="position:absolute;left:600.00px;top:197.5px;width:6.30px;height:5.3px;background:#3f87d6"></div>
<div style="position:absolute;left:606.00px;top:197.5px;width:6.30px;height:5.3px;background:#5399dd"></div>
<div style="position:absolute;left:612.00px;top:197.5px;width:6.30px;height:5.3px;background:#6ea6e2"></div>
<div style="position:absolute;left:618.00px;top:197.5px;width:6.30px;height:5.3px;background:#4a90da"></div>
<div style="position:absolute;left:624.00px;top:197.5px;width:6.30px;height:5.3px;background:#6aa4e3"></div>
<div style="position:absolute;left:630.00px;top:197.5px;width:6.30px;height:5.3px;background:#5d9ce0"></div>
<div style="position:absolute;left:636.00px;top:197.5px;width:6.30px;height:5.3px;background:#4f93db"></div>
<div style="position:absolute;left:642.00px;top:197.5px;width:6.30px;height:5.3px;background:#5399dd"></div>
<div style="position:absolute;left:648.00px;top:197.5px;width:6.30px;height:5.3px;background:#6ea6e2"></div>
<div style="position:absolute;left:654.00px;top:197.5px;width:6.30px;height:5.3px;background:#3f87d6"></div>
<div style="position:absolute;left:660.00px;top:197.5px;width:6.30px;height:5.3px;background:#5d9ce0"></div>
<div style="position:absolute;left:666.00px;top:197.5px;width:6.30px;height:5.3px;background:#4a90da"></div>
<div style="position:absolute;left:672.00px;top:197.5px;width:6.30px;height:5.3px;background:#6aa4e3"></div>
<div style="position:absolute;left:678.00px;top:197.5px;width:6.30px;height:5.3px;background:#5399dd"></div>
<div style="position:absolute;left:684.00px;top:197.5px;width:6.30px;height:5.3px;background:#4f93db"></div>
<div style="position:absolute;left:690.00px;top:197.5px;width:6.30px;height:5.3px;background:#6ea6e2"></div>
<div style="position:absolute;left:696.00px;top:197.5px;width:6.30px;height:5.3px;background:#5d9ce0"></div>
<div style="position:absolute;left:702.00px;top:197.5px;width:6.30px;height:5.3px;background:#4a90da"></div>
<div style="position:absolute;left:708.00px;top:197.5px;width:6.30px;height:5.3px;background:#86b6ea"></div>
<div style="position:absolute;left:714.00px;top:197.5px;width:6.30px;height:5.3px;background:#4a90da"></div>
<div style="position:absolute;left:720.00px;top:197.5px;width:6.30px;height:5.3px;background:#5d9ce0"></div>
<div style="position:absolute;left:518px;top:202px;width:208px;height:1px;background:#2f7fd3;"></div>
<div style="position:absolute;left:1013px;top:176px;width:120px;height:50px;background:linear-gradient(#f9f9fa,#eef0f2 60%,#e8eaed);border:1px solid #bcc0c6;border-radius:3px;"></div>
<svg style="position:absolute;left:1016px;top:187px" width="34" height="28" viewBox="0 0 34 28"><defs><linearGradient id="rg" x1="0" y1="0" x2="0" y2="1"><stop offset="0" stop-color="#e2f0fb"/><stop offset="0.5" stop-color="#a9cdef"/><stop offset="1" stop-color="#6fa6dc"/></linearGradient></defs>
<path d="M1 13.4 L8 2 L14.6 13.4 L11 13.4 L11 14 A7 7 0 0 0 20.96 20.34 L23.07 24.88 A12 12 0 0 1 6 14 L6 13.4 Z" fill="url(#rg)" stroke="#3f74b8" stroke-width="0.9" stroke-linejoin="round"/>
<path d="M32.7 14.6 L26 25.6 L20 14.6 L25 14.6 L25 14 A7 7 0 0 0 15.04 7.66 L12.93 3.12 A12 12 0 0 1 30 14 L30 14.6 Z" fill="url(#rg)" stroke="#3f74b8" stroke-width="0.9" stroke-linejoin="round"/></svg>
<div style="position:absolute;left:1062px;top:194.78px;font-size:12.4px;color:#333;white-space:nowrap;line-height:normal;">Обновить</div>
<div style="position:absolute;left:1140px;top:180px;width:13px;height:13px;background:linear-gradient(#e6e8eb,#d9dcdf);border:1px solid #9ca1a8;"></div>
<svg style="position:absolute;left:1142px;top:182px" width="10" height="10" viewBox="0 0 10 10"><path d="M1.5 5 L4 8.2 L8.3 1.5" stroke="#3a3a3a" stroke-width="1.9" fill="none"/></svg>
<div style="position:absolute;left:1157px;top:180.60px;font-size:12.6px;color:#111;white-space:nowrap;line-height:normal;">Автообновление</div>
<div style="position:absolute;left:1139px;top:203px;width:51px;height:22px;background:#fff;border:1px solid #abb0b6;"></div>
<div style="position:absolute;left:1174px;top:204px;width:15px;height:20px;background:linear-gradient(#f7f8f9,#eceef0);border-left:1px solid #d3d6da;"></div>
<svg style="position:absolute;left:1177px;top:207px" width="8" height="14" viewBox="0 0 8 14"><path d="M1.5 3.5 L4 1 L6.5 3.5 Z" fill="#7a7e84"/><path d="M1.5 10 L4 12.5 L6.5 10 Z" fill="#7a7e84"/></svg>
<div style="position:absolute;right:271px;top:207.60px;font-size:12.6px;color:#111;white-space:nowrap;line-height:normal;text-align:right;">60</div>
<div style="position:absolute;left:1196px;top:208.60px;font-size:12.6px;color:#111;white-space:nowrap;line-height:normal;">секунд</div>
<div style="position:absolute;left:1326px;top:183px;width:99px;height:23px;background:#a8e48f;"></div>
<div style="position:absolute;left:1327.5px;top:185.17px;font-size:18.6px;color:#000;white-space:nowrap;line-height:normal;-webkit-text-stroke:0.35px #000;letter-spacing:-0.15px">13.10 15:55</div>
<div style="position:absolute;left:2px;top:236px;width:477px;height:20px;background:#fffacc;"></div>
<div style="position:absolute;left:-59.5px;width:600px;top:238.78px;font-size:12.4px;color:#111;white-space:nowrap;line-height:normal;text-align:center;">В очереди</div>
<div style="position:absolute;left:485px;top:236px;width:474px;height:20px;background:#f9d48b;"></div>
<div style="position:absolute;left:422px;width:600px;top:238.78px;font-size:12.4px;color:#111;white-space:nowrap;line-height:normal;text-align:center;">В работе</div>
<div style="position:absolute;left:965px;top:236px;width:469px;height:20px;background:#ddf7b9;"></div>
<div style="position:absolute;left:899.5px;width:600px;top:238.78px;font-size:12.4px;color:#111;white-space:nowrap;line-height:normal;text-align:center;">Перемещение на витрину</div>
<div style="position:absolute;left:479px;top:256px;width:7px;height:572px;background:#e6e9ec;"></div>
<div style="position:absolute;left:958px;top:256px;width:7px;height:572px;background:#e6e9ec;"></div>
<div style="position:absolute;left:2px;top:256px;width:477px;height:572px;background:#eaedf0;"></div>
<div style="position:absolute;left:486px;top:256px;width:472px;height:572px;background:#fff;"></div>
<div style="position:absolute;left:966px;top:256px;width:468px;height:572px;background:#eaedf0;"></div>
<div style="position:absolute;left:478px;top:256px;width:1px;height:572px;background:#a9aeb5;"></div>
<div style="position:absolute;left:485px;top:256px;width:1px;height:572px;background:#a9aeb5;"></div>
<div style="position:absolute;left:958px;top:256px;width:1px;height:572px;background:#a9aeb5;"></div>
<div style="position:absolute;left:965px;top:256px;width:1px;height:572px;background:#a9aeb5;"></div>
<div style="position:absolute;left:2px;top:827px;width:1432px;height:1px;background:#eef0f2;"></div>
<div style="position:absolute;left:1433px;top:256px;width:1px;height:572px;background:#b9bdc3;"></div>
<div style="position:absolute;left:4px;top:257px;width:430px;height:64px;background:linear-gradient(#fdfdfd,#f3f4f5 55%,#eaebed);border-left:1px solid #d3d6da;border-right:1px solid #d0d3d7;border-bottom:1px solid #b9bdc3;"></div>
<div style="position:absolute;left:101px;top:260px;width:1px;height:58px;background:#d6d9dc;"></div>
<div style="position:absolute;left:364px;top:260px;width:1px;height:58px;background:#d6d9dc;"></div>
<svg style="position:absolute;left:37px;top:273px" width="30" height="30" viewBox="0 0 30 30"><defs><radialGradient id="pg" cx="0.35" cy="0.25" r="0.85"><stop offset="0" stop-color="#c9e0f5"/><stop offset="0.6" stop-color="#86b5e3"/><stop offset="1" stop-color="#4f8ac8"/></radialGradient></defs>
<circle cx="15" cy="15" r="13.6" fill="url(#pg)" stroke="#3f78b5" stroke-width="0.9"/>
<path d="M13.1 7.4 H16.9 V13.1 H22.6 V16.9 H16.9 V22.6 H13.1 V16.9 H7.4 V13.1 H13.1 Z" fill="#f4f7fa" stroke="#27578f" stroke-width="1.1" stroke-linejoin="round"/></svg>
<svg style="position:absolute;left:125px;top:275px" width="23" height="25" viewBox="0 0 23 25"><defs><linearGradient id="ag" x1="0" y1="0" x2="0" y2="1"><stop offset="0" stop-color="#c9cbcc"/><stop offset="1" stop-color="#bcbfc0"/></linearGradient></defs><path d="M11.5 0.5 L21.5 12 H16 V24.5 H7 V12 H1.5 Z" fill="url(#ag)" stroke="#b3b6b8" stroke-width="0.6"/></svg>
<svg style="position:absolute;left:189px;top:274px" width="21" height="27" viewBox="0 0 21 27"><path d="M10.5 1 L19.5 12.5 H1.5 Z" fill="#c6c8c9" stroke="#b6b9ba" stroke-width="0.6"/><path d="M10.5 8.5 L20 26 H1 Z" fill="#c0c2c3" stroke="#b3b6b7" stroke-width="0.6"/></svg>
<svg style="position:absolute;left:253px;top:275px" width="23" height="27" viewBox="0 0 23 27"><defs><linearGradient id="dg" x1="0" y1="0" x2="0" y2="1"><stop offset="0" stop-color="#d4e7f7"/><stop offset="0.5" stop-color="#9cc6ec"/><stop offset="1" stop-color="#5a98d4"/></linearGradient></defs>
<path d="M6.2 1 H16.2 V9.5 H22 L11.5 25.5 L1 9.5 H6.2 Z" fill="url(#dg)" stroke="#5a8fca" stroke-width="0.9" stroke-linejoin="round"/></svg>
<svg style="position:absolute;left:315px;top:271px" width="31" height="34" viewBox="0 0 31 34"><path d="M2 7 L7 2 H23.5 V28.5 H2 Z" fill="#edf2f9" stroke="#5a7fbf" stroke-width="1"/>
<path d="M2 7 H7 V2" fill="#dfe7f3" stroke="#5a7fbf" stroke-width="1"/>
<path d="M9.5 28.5 L25.5 12.5 L29.5 16.5 L13.5 32 L9 32.5 Z" fill="#f3b640" stroke="#a36a1a" stroke-width="0.8"/>
<path d="M11.5 29.5 L27 14" stroke="#fce0a0" stroke-width="1"/>
<path d="M24.5 13.5 L28.5 17.5 L30 16 L26 12 Z" fill="#e07070" stroke="#a04040" stroke-width="0.5"/>
<path d="M23.5 14.5 L27.5 18.5" stroke="#8aa0c0" stroke-width="1.2"/>
<path d="M9.5 28.5 L13 32 L8.5 32.8 Z" fill="#333"/></svg>
<svg style="position:absolute;left:386px;top:274px" width="28" height="28" viewBox="0 0 28 28"><defs><linearGradient id="xg" x1="0" y1="0" x2="0" y2="1"><stop offset="0" stop-color="#eea595"/><stop offset="0.5" stop-color="#d9604e"/><stop offset="1" stop-color="#b83a2c"/></linearGradient></defs>
<path d="M6 3 L14 10.5 L22 3 C23 2 24.5 2 25.5 3 C26.5 4 26.5 5.5 25.5 6.5 L17.5 14 L25.5 21.5 C26.5 22.5 26.5 24 25.5 25 C24.5 26 23 26 22 25 L14 17.5 L6 25 C5 26 3.5 26 2.5 25 C1.5 24 1.5 22.5 2.5 21.5 L10.5 14 L2.5 6.5 C1.5 5.5 1.5 4 2.5 3 C3.5 2 5 2 6 3 Z" fill="url(#xg)" stroke="#a8392c" stroke-width="0.8"/></svg>
<div style="position:absolute;left:4px;top:321px;width:474px;height:23px;background:linear-gradient(#fafbfc,#f0f2f4);border-bottom:1px solid #b9bec4;"></div>
<div style="position:absolute;left:19px;top:322px;width:1px;height:22px;background:#c3c7cc;"></div>
<div style="position:absolute;left:79px;top:322px;width:1px;height:22px;background:#c3c7cc;"></div>
<div style="position:absolute;left:389px;top:322px;width:1px;height:22px;background:#c3c7cc;"></div>
<div style="position:absolute;left:84px;top:324.60px;font-size:12.6px;color:#333;white-space:nowrap;line-height:normal;">Товар</div>
<div style="position:absolute;left:460px;top:322px;width:1px;height:22px;background:#c3c7cc;"></div>
<div style="position:absolute;left:394px;top:324.60px;font-size:12.6px;color:#333;white-space:nowrap;line-height:normal;">Кол-во</div>
<svg style="position:absolute;left:376px;top:329px" width="8" height="5" viewBox="0 0 8 5"><path d="M0 5 L4 0.5 L8 5 Z" fill="#222"/></svg>
<div style="position:absolute;left:4px;top:344px;width:16px;height:21px;background:#f1f3f6;border-bottom:1px solid #b5bac1;border-right:1px solid #b5bac1;"></div>
<div style="position:absolute;left:20px;top:344px;width:441px;height:21px;background:linear-gradient(#eeeff2,#e6e7ea);border-bottom:1px solid #dfe2e6;"></div>
<div style="position:absolute;left:79px;top:344px;width:1px;height:21px;background:#dfe2e6;"></div>
<div style="position:absolute;left:389px;top:344px;width:1px;height:21px;background:#dfe2e6;"></div>
<div style="position:absolute;right:1364px;top:348.10px;font-size:12.6px;color:#111;white-space:nowrap;line-height:normal;text-align:right;">1</div>
<div style="position:absolute;left:84px;top:348.10px;font-size:12.6px;color:#111;white-space:nowrap;line-height:normal;">Пицца с курицей и грибами 160</div>
<div style="position:absolute;right:983px;top:348.10px;font-size:12.6px;color:#111;white-space:nowrap;line-height:normal;text-align:right;">6</div>
<svg style="position:absolute;left:10px;top:351px" width="5" height="8" viewBox="0 0 5 8"><path d="M0.5 0.5 L4.5 4 L0.5 7.5 Z" fill="#7a7f86"/></svg>
<div style="position:absolute;left:4px;top:365px;width:16px;height:21px;background:#f1f3f6;border-bottom:1px solid #b5bac1;border-right:1px solid #b5bac1;"></div>
<div style="position:absolute;left:20px;top:365px;width:441px;height:21px;background:#fff;border-bottom:1px solid #dfe2e6;"></div>
<div style="position:absolute;left:79px;top:365px;width:1px;height:21px;background:#dfe2e6;"></div>
<div style="position:absolute;left:389px;top:365px;width:1px;height:21px;background:#dfe2e6;"></div>
<div style="position:absolute;right:1364px;top:369.10px;font-size:12.6px;color:#111;white-space:nowrap;line-height:normal;text-align:right;">2</div>
<div style="position:absolute;left:84px;top:369.10px;font-size:12.6px;color:#111;white-space:nowrap;line-height:normal;">Батон пшеничный 380</div>
<div style="position:absolute;right:983px;top:369.10px;font-size:12.6px;color:#111;white-space:nowrap;line-height:normal;text-align:right;">8</div>
<div style="position:absolute;left:4px;top:386px;width:16px;height:21px;background:#f1f3f6;border-bottom:1px solid #b5bac1;border-right:1px solid #b5bac1;"></div>
<div style="position:absolute;left:20px;top:386px;width:441px;height:21px;background:#fff;border-bottom:1px solid #dfe2e6;"></div>
<div style="position:absolute;left:79px;top:386px;width:1px;height:21px;background:#dfe2e6;"></div>
<div style="position:absolute;left:389px;top:386px;width:1px;height:21px;background:#dfe2e6;"></div>
<div style="position:absolute;right:1364px;top:390.10px;font-size:12.6px;color:#111;white-space:nowrap;line-height:normal;text-align:right;">3</div>
<div style="position:absolute;left:84px;top:390.10px;font-size:12.6px;color:#111;white-space:nowrap;line-height:normal;">Хлеб белый с Чесноком и Укропом 410</div>
<div style="position:absolute;right:983px;top:390.10px;font-size:12.6px;color:#111;white-space:nowrap;line-height:normal;text-align:right;">10</div>
<div style="position:absolute;left:4px;top:407px;width:16px;height:21px;background:#f1f3f6;border-bottom:1px solid #b5bac1;border-right:1px solid #b5bac1;"></div>
<div style="position:absolute;left:20px;top:407px;width:441px;height:21px;background:#fff;border-bottom:1px solid #dfe2e6;"></div>
<div style="position:absolute;left:79px;top:407px;width:1px;height:21px;background:#dfe2e6;"></div>
<div style="position:absolute;left:389px;top:407px;width:1px;height:21px;background:#dfe2e6;"></div>
<div style="position:absolute;right:1364px;top:411.10px;font-size:12.6px;color:#111;white-space:nowrap;line-height:normal;text-align:right;">4</div>
<div style="position:absolute;left:84px;top:411.10px;font-size:12.6px;color:#111;white-space:nowrap;line-height:normal;">Хлеб бородинский 380</div>
<div style="position:absolute;right:983px;top:411.10px;font-size:12.6px;color:#111;white-space:nowrap;line-height:normal;text-align:right;">10</div>
<div style="position:absolute;left:4px;top:428px;width:16px;height:21px;background:#f1f3f6;border-bottom:1px solid #b5bac1;border-right:1px solid #b5bac1;"></div>
<div style="position:absolute;left:20px;top:428px;width:441px;height:21px;background:#fff;border-bottom:1px solid #dfe2e6;"></div>
<div style="position:absolute;left:79px;top:428px;width:1px;height:21px;background:#dfe2e6;"></div>
<div style="position:absolute;left:389px;top:428px;width:1px;height:21px;background:#dfe2e6;"></div>
<div style="position:absolute;right:1364px;top:432.10px;font-size:12.6px;color:#111;white-space:nowrap;line-height:normal;text-align:right;">5</div>
<div style="position:absolute;left:84px;top:432.10px;font-size:12.6px;color:#111;white-space:nowrap;line-height:normal;">Хлеб Дарницкий 340</div>
<div style="position:absolute;right:983px;top:432.10px;font-size:12.6px;color:#111;white-space:nowrap;line-height:normal;text-align:right;">10</div>
<div style="position:absolute;left:4px;top:449px;width:16px;height:21px;background:#f1f3f6;border-bottom:1px solid #b5bac1;border-right:1px solid #b5bac1;"></div>
<div style="position:absolute;left:20px;top:449px;width:441px;height:21px;background:#fff;border-bottom:1px solid #dfe2e6;"></div>
<div style="position:absolute;left:79px;top:449px;width:1px;height:21px;background:#dfe2e6;"></div>
<div style="position:absolute;left:389px;top:449px;width:1px;height:21px;background:#dfe2e6;"></div>
<div style="position:absolute;right:1364px;top:453.10px;font-size:12.6px;color:#111;white-space:nowrap;line-height:normal;text-align:right;">6</div>
<div style="position:absolute;left:84px;top:453.10px;font-size:12.6px;color:#111;white-space:nowrap;line-height:normal;">Хачапури слоеное 145</div>
<div style="position:absolute;right:983px;top:453.10px;font-size:12.6px;color:#111;white-space:nowrap;line-height:normal;text-align:right;">4</div>
<div style="position:absolute;left:4px;top:470px;width:16px;height:21px;background:#f1f3f6;border-bottom:1px solid #b5bac1;border-right:1px solid #b5bac1;"></div>
<div style="position:absolute;left:20px;top:470px;width:441px;height:21px;background:#fff;border-bottom:1px solid #dfe2e6;"></div>
<div style="position:absolute;left:79px;top:470px;width:1px;height:21px;background:#dfe2e6;"></div>
<div style="position:absolute;left:389px;top:470px;width:1px;height:21px;background:#dfe2e6;"></div>
<div style="position:absolute;right:1364px;top:474.10px;font-size:12.6px;color:#111;white-space:nowrap;line-height:normal;text-align:right;">7</div>
<div style="position:absolute;left:84px;top:474.10px;font-size:12.6px;color:#111;white-space:nowrap;line-height:normal;">Штрудель с ябл, корицей и гр орехом 100</div>
<div style="position:absolute;right:983px;top:474.10px;font-size:12.6px;color:#111;white-space:nowrap;line-height:normal;text-align:right;">5</div>
<div style="position:absolute;left:4px;top:491px;width:16px;height:21px;background:#f1f3f6;border-bottom:1px solid #b5bac1;border-right:1px solid #b5bac1;"></div>
<div style="position:absolute;left:20px;top:491px;width:441px;height:21px;background:#fff;border-bottom:1px solid #dfe2e6;"></div>
<div style="position:absolute;left:79px;top:491px;width:1px;height:21px;background:#dfe2e6;"></div>
<div style="position:absolute;left:389px;top:491px;width:1px;height:21px;background:#dfe2e6;"></div>
<div style="position:absolute;right:1364px;top:495.10px;font-size:12.6px;color:#111;white-space:nowrap;line-height:normal;text-align:right;">8</div>
<div style="position:absolute;left:84px;top:495.10px;font-size:12.6px;color:#111;white-space:nowrap;line-height:normal;">Круассан с вишневой начинкой 80</div>
<div style="position:absolute;right:983px;top:495.10px;font-size:12.6px;color:#111;white-space:nowrap;line-height:normal;text-align:right;">10</div>
<div style="position:absolute;left:4px;top:512px;width:16px;height:21px;background:#f1f3f6;border-bottom:1px solid #b5bac1;border-right:1px solid #b5bac1;"></div>
<div style="position:absolute;left:20px;top:512px;width:441px;height:21px;background:#fff;border-bottom:1px solid #dfe2e6;"></div>
<div style="position:absolute;left:79px;top:512px;width:1px;height:21px;background:#dfe2e6;"></div>
<div style="position:absolute;left:389px;top:512px;width:1px;height:21px;background:#dfe2e6;"></div>
<div style="position:absolute;right:1364px;top:516.10px;font-size:12.6px;color:#111;white-space:nowrap;line-height:normal;text-align:right;">9</div>
<div style="position:absolute;left:84px;top:516.10px;font-size:12.6px;color:#111;white-space:nowrap;line-height:normal;">Круассан с шоколадной глазурью 80</div>
<div style="position:absolute;right:983px;top:516.10px;font-size:12.6px;color:#111;white-space:nowrap;line-height:normal;text-align:right;">10</div>
<div style="position:absolute;left:4px;top:533px;width:16px;height:21px;background:#f1f3f6;border-bottom:1px solid #b5bac1;border-right:1px solid #b5bac1;"></div>
<div style="position:absolute;left:20px;top:533px;width:441px;height:21px;background:#fff;border-bottom:1px solid #dfe2e6;"></div>
<div style="position:absolute;left:79px;top:533px;width:1px;height:21px;background:#dfe2e6;"></div>
<div style="position:absolute;left:389px;top:533px;width:1px;height:21px;background:#dfe2e6;"></div>
<div style="position:absolute;right:1364px;top:537.10px;font-size:12.6px;color:#111;white-space:nowrap;line-height:normal;text-align:right;">10</div>
<div style="position:absolute;left:84px;top:537.10px;font-size:12.6px;color:#111;white-space:nowrap;line-height:normal;">Круассан с шоколадной начинкой 80</div>
<div style="position:absolute;right:983px;top:537.10px;font-size:12.6px;color:#111;white-space:nowrap;line-height:normal;text-align:right;">15</div>
<div style="position:absolute;left:4px;top:554px;width:16px;height:21px;background:#f1f3f6;border-bottom:1px solid #b5bac1;border-right:1px solid #b5bac1;"></div>
<div style="position:absolute;left:20px;top:554px;width:441px;height:21px;background:#fff;border-bottom:1px solid #dfe2e6;"></div>
<div style="position:absolute;left:79px;top:554px;width:1px;height:21px;background:#dfe2e6;"></div>
<div style="position:absolute;left:389px;top:554px;width:1px;height:21px;background:#dfe2e6;"></div>
<div style="position:absolute;right:1364px;top:558.10px;font-size:12.6px;color:#111;white-space:nowrap;line-height:normal;text-align:right;">11</div>
<div style="position:absolute;left:84px;top:558.10px;font-size:12.6px;color:#111;white-space:nowrap;line-height:normal;">Сочник 120</div>
<div style="position:absolute;right:983px;top:558.10px;font-size:12.6px;color:#111;white-space:nowrap;line-height:normal;text-align:right;">30</div>
<div style="position:absolute;left:4px;top:575px;width:16px;height:21px;background:#f1f3f6;border-bottom:1px solid #b5bac1;border-right:1px solid #b5bac1;"></div>
<div style="position:absolute;left:20px;top:575px;width:441px;height:21px;background:#fff;border-bottom:1px solid #dfe2e6;"></div>
<div style="position:absolute;left:79px;top:575px;width:1px;height:21px;background:#dfe2e6;"></div>
<div style="position:absolute;left:389px;top:575px;width:1px;height:21px;background:#dfe2e6;"></div>
<div style="position:absolute;right:1364px;top:579.10px;font-size:12.6px;color:#111;white-space:nowrap;line-height:normal;text-align:right;">12</div>
<div style="position:absolute;left:84px;top:579.10px;font-size:12.6px;color:#111;white-space:nowrap;line-height:normal;">Корзиночка с ягодами и кремом 90</div>
<div style="position:absolute;right:983px;top:579.10px;font-size:12.6px;color:#111;white-space:nowrap;line-height:normal;text-align:right;">32</div>
<div style="position:absolute;left:4px;top:596px;width:16px;height:21px;background:#f1f3f6;border-bottom:1px solid #b5bac1;border-right:1px solid #b5bac1;"></div>
<div style="position:absolute;left:20px;top:596px;width:441px;height:21px;background:#fff;border-bottom:1px solid #dfe2e6;"></div>
<div style="position:absolute;left:79px;top:596px;width:1px;height:21px;background:#dfe2e6;"></div>
<div style="position:absolute;left:389px;top:596px;width:1px;height:21px;background:#dfe2e6;"></div>
<div style="position:absolute;right:1364px;top:600.10px;font-size:12.6px;color:#111;white-space:nowrap;line-height:normal;text-align:right;">13</div>
<div style="position:absolute;left:84px;top:600.10px;font-size:12.6px;color:#111;white-space:nowrap;line-height:normal;">Трубочка с кремом Шанти 120</div>
<div style="position:absolute;right:983px;top:600.10px;font-size:12.6px;color:#111;white-space:nowrap;line-height:normal;text-align:right;">19</div>
<div style="position:absolute;left:4px;top:617px;width:16px;height:21px;background:#f1f3f6;border-bottom:1px solid #b5bac1;border-right:1px solid #b5bac1;"></div>
<div style="position:absolute;left:20px;top:617px;width:441px;height:21px;background:#fff;border-bottom:1px solid #dfe2e6;"></div>
<div style="position:absolute;left:79px;top:617px;width:1px;height:21px;background:#dfe2e6;"></div>
<div style="position:absolute;left:389px;top:617px;width:1px;height:21px;background:#dfe2e6;"></div>
<div style="position:absolute;right:1364px;top:621.10px;font-size:12.6px;color:#111;white-space:nowrap;line-height:normal;text-align:right;">14</div>
<div style="position:absolute;left:84px;top:621.10px;font-size:12.6px;color:#111;white-space:nowrap;line-height:normal;">Торт Наполеон</div>
<div style="position:absolute;right:983px;top:621.10px;font-size:12.6px;color:#111;white-space:nowrap;line-height:normal;text-align:right;">1</div>
<div style="position:absolute;left:4px;top:638px;width:16px;height:21px;background:#f1f3f6;border-bottom:1px solid #b5bac1;border-right:1px solid #b5bac1;"></div>
<div style="position:absolute;left:20px;top:638px;width:441px;height:21px;background:#fff;border-bottom:1px solid #dfe2e6;"></div>
<div style="position:absolute;left:79px;top:638px;width:1px;height:21px;background:#dfe2e6;"></div>
<div style="position:absolute;left:389px;top:638px;width:1px;height:21px;background:#dfe2e6;"></div>
<div style="position:absolute;right:1364px;top:642.10px;font-size:12.6px;color:#111;white-space:nowrap;line-height:normal;text-align:right;">15</div>
<div style="position:absolute;left:84px;top:642.10px;font-size:12.6px;color:#111;white-space:nowrap;line-height:normal;">Эклер со сливочным кремом 105</div>
<div style="position:absolute;right:983px;top:642.10px;font-size:12.6px;color:#111;white-space:nowrap;line-height:normal;text-align:right;">8</div>
<div style="position:absolute;left:4px;top:659px;width:16px;height:21px;background:#f1f3f6;border-bottom:1px solid #b5bac1;border-right:1px solid #b5bac1;"></div>
<div style="position:absolute;left:20px;top:659px;width:441px;height:21px;background:#fff;border-bottom:1px solid #dfe2e6;"></div>
<div style="position:absolute;left:79px;top:659px;width:1px;height:21px;background:#dfe2e6;"></div>
<div style="position:absolute;left:389px;top:659px;width:1px;height:21px;background:#dfe2e6;"></div>
<div style="position:absolute;right:1364px;top:663.10px;font-size:12.6px;color:#111;white-space:nowrap;line-height:normal;text-align:right;">16</div>
<div style="position:absolute;left:84px;top:663.10px;font-size:12.6px;color:#111;white-space:nowrap;line-height:normal;">Кольцо заварное сливочно-творожное 105</div>
<div style="position:absolute;right:983px;top:663.10px;font-size:12.6px;color:#111;white-space:nowrap;line-height:normal;text-align:right;">8</div>
<div style="position:absolute;left:4px;top:680px;width:16px;height:21px;background:#f1f3f6;border-bottom:1px solid #b5bac1;border-right:1px solid #b5bac1;"></div>
<div style="position:absolute;left:20px;top:680px;width:441px;height:21px;background:#fff;border-bottom:1px solid #dfe2e6;"></div>
<div style="position:absolute;left:79px;top:680px;width:1px;height:21px;background:#dfe2e6;"></div>
<div style="position:absolute;left:389px;top:680px;width:1px;height:21px;background:#dfe2e6;"></div>
<div style="position:absolute;right:1364px;top:684.10px;font-size:12.6px;color:#111;white-space:nowrap;line-height:normal;text-align:right;">17</div>
<div style="position:absolute;left:84px;top:684.10px;font-size:12.6px;color:#111;white-space:nowrap;line-height:normal;">Картофель с грибами</div>
<div style="position:absolute;right:983px;top:684.10px;font-size:12.6px;color:#111;white-space:nowrap;line-height:normal;text-align:right;">1</div>
<div style="position:absolute;left:4px;top:701px;width:16px;height:21px;background:#f1f3f6;border-bottom:1px solid #b5bac1;border-right:1px solid #b5bac1;"></div>
<div style="position:absolute;left:20px;top:701px;width:441px;height:21px;background:#fff;border-bottom:1px solid #dfe2e6;"></div>
<div style="position:absolute;left:79px;top:701px;width:1px;height:21px;background:#dfe2e6;"></div>
<div style="position:absolute;left:389px;top:701px;width:1px;height:21px;background:#dfe2e6;"></div>
<div style="position:absolute;right:1364px;top:705.10px;font-size:12.6px;color:#111;white-space:nowrap;line-height:normal;text-align:right;">18</div>
<div style="position:absolute;left:84px;top:705.10px;font-size:12.6px;color:#111;white-space:nowrap;line-height:normal;">Котлеты нежные</div>
<div style="position:absolute;right:983px;top:705.10px;font-size:12.6px;color:#111;white-space:nowrap;line-height:normal;text-align:right;">1</div>
<div style="position:absolute;left:4px;top:722px;width:16px;height:21px;background:#f1f3f6;border-bottom:1px solid #b5bac1;border-right:1px solid #b5bac1;"></div>
<div style="position:absolute;left:20px;top:722px;width:441px;height:21px;background:#fff;border-bottom:1px solid #dfe2e6;"></div>
<div style="position:absolute;left:79px;top:722px;width:1px;height:21px;background:#dfe2e6;"></div>
<div style="position:absolute;left:389px;top:722px;width:1px;height:21px;background:#dfe2e6;"></div>
<div style="position:absolute;right:1364px;top:726.10px;font-size:12.6px;color:#111;white-space:nowrap;line-height:normal;text-align:right;">19</div>
<div style="position:absolute;left:84px;top:726.10px;font-size:12.6px;color:#111;white-space:nowrap;line-height:normal;">Филе индейки с овощами под сыром</div>
<div style="position:absolute;right:983px;top:726.10px;font-size:12.6px;color:#111;white-space:nowrap;line-height:normal;text-align:right;">1</div>
<div style="position:absolute;left:4px;top:743px;width:16px;height:21px;background:#f1f3f6;border-bottom:1px solid #b5bac1;border-right:1px solid #b5bac1;"></div>
<div style="position:absolute;left:20px;top:743px;width:441px;height:21px;background:#fff;border-bottom:1px solid #dfe2e6;"></div>
<div style="position:absolute;left:79px;top:743px;width:1px;height:21px;background:#dfe2e6;"></div>
<div style="position:absolute;left:389px;top:743px;width:1px;height:21px;background:#dfe2e6;"></div>
<div style="position:absolute;right:1364px;top:747.10px;font-size:12.6px;color:#111;white-space:nowrap;line-height:normal;text-align:right;">20</div>
<div style="position:absolute;left:84px;top:747.10px;font-size:12.6px;color:#111;white-space:nowrap;line-height:normal;">Вишневый морс 0.5</div>
<div style="position:absolute;right:983px;top:747.10px;font-size:12.6px;color:#111;white-space:nowrap;line-height:normal;text-align:right;">1</div>
<div style="position:absolute;left:4px;top:764px;width:16px;height:21px;background:#f1f3f6;border-bottom:1px solid #b5bac1;border-right:1px solid #b5bac1;"></div>
<div style="position:absolute;left:20px;top:764px;width:441px;height:21px;background:#fff;border-bottom:1px solid #dfe2e6;"></div>
<div style="position:absolute;left:79px;top:764px;width:1px;height:21px;background:#dfe2e6;"></div>
<div style="position:absolute;left:389px;top:764px;width:1px;height:21px;background:#dfe2e6;"></div>
<div style="position:absolute;right:1364px;top:768.10px;font-size:12.6px;color:#111;white-space:nowrap;line-height:normal;text-align:right;">21</div>
<div style="position:absolute;left:84px;top:768.10px;font-size:12.6px;color:#111;white-space:nowrap;line-height:normal;">Вишневый морс 1л</div>
<div style="position:absolute;right:983px;top:768.10px;font-size:12.6px;color:#111;white-space:nowrap;line-height:normal;text-align:right;">1</div>
<div style="position:absolute;left:4px;top:785px;width:16px;height:21px;background:#f1f3f6;border-bottom:1px solid #b5bac1;border-right:1px solid #b5bac1;"></div>
<div style="position:absolute;left:20px;top:785px;width:441px;height:21px;background:#fff;border-bottom:1px solid #dfe2e6;"></div>
<div style="position:absolute;left:79px;top:785px;width:1px;height:21px;background:#dfe2e6;"></div>
<div style="position:absolute;left:389px;top:785px;width:1px;height:21px;background:#dfe2e6;"></div>
<div style="position:absolute;right:1364px;top:789.10px;font-size:12.6px;color:#111;white-space:nowrap;line-height:normal;text-align:right;">22</div>
<div style="position:absolute;left:84px;top:789.10px;font-size:12.6px;color:#111;white-space:nowrap;line-height:normal;">Клубничный морс 0.5</div>
<div style="position:absolute;right:983px;top:789.10px;font-size:12.6px;color:#111;white-space:nowrap;line-height:normal;text-align:right;">1</div>
<div style="position:absolute;left:4px;top:806px;width:16px;height:21px;background:#f1f3f6;border-bottom:1px solid #b5bac1;border-right:1px solid #b5bac1;"></div>
<div style="position:absolute;left:20px;top:806px;width:441px;height:21px;background:#fff;border-bottom:1px solid #dfe2e6;"></div>
<div style="position:absolute;left:79px;top:806px;width:1px;height:21px;background:#dfe2e6;"></div>
<div style="position:absolute;left:389px;top:806px;width:1px;height:21px;background:#dfe2e6;"></div>
<div style="position:absolute;right:1364px;top:810.10px;font-size:12.6px;color:#111;white-space:nowrap;line-height:normal;text-align:right;">23</div>
<div style="position:absolute;left:84px;top:810.10px;font-size:12.6px;color:#111;white-space:nowrap;line-height:normal;">Клубничный морс 1л</div>
<div style="position:absolute;right:983px;top:810.10px;font-size:12.6px;color:#111;white-space:nowrap;line-height:normal;text-align:right;">1</div>
<div style="position:absolute;left:461px;top:344px;width:17px;height:483px;background:linear-gradient(90deg,#f4f5f7,#fbfbfc);"></div>
<svg style="position:absolute;left:463px;top:349px" width="11" height="6" viewBox="0 0 11 6"><path d="M0.5 5.5 L5.5 0.5 L10.5 5.5 Z" fill="#5d6268"/></svg>
<svg style="position:absolute;left:463px;top:816px" width="11" height="6" viewBox="0 0 11 6"><path d="M0.5 0.5 L5.5 5.5 L10.5 0.5 Z" fill="#5d6268"/></svg>
<div style="position:absolute;left:461px;top:361px;width:15px;height:322px;background:linear-gradient(90deg,#eaecef,#f6f7f8 50%,#e5e8eb);border:1px solid #aeb3b9;border-radius:2px;"></div>
<svg style="position:absolute;left:464px;top:517px" width="9" height="9" viewBox="0 0 9 9"><g stroke="#6b7076" stroke-width="1"><line x1="1" y1="1.5" x2="8" y2="1.5"/><line x1="1" y1="3.5" x2="8" y2="3.5"/><line x1="1" y1="5.5" x2="8" y2="5.5"/><line x1="1" y1="7.5" x2="8" y2="7.5"/></g></svg>
<div style="position:absolute;left:486px;top:256px;width:472px;height:24px;background:linear-gradient(#fafbfc,#f0f2f4);border-bottom:1px solid #b9bec4;"></div>
<div style="position:absolute;left:502px;top:257px;width:1px;height:23px;background:#c3c7cc;"></div>
<div style="position:absolute;left:562px;top:257px;width:1px;height:23px;background:#c3c7cc;"></div>
<div style="position:absolute;left:791px;top:257px;width:1px;height:23px;background:#c3c7cc;"></div>
<div style="position:absolute;left:567px;top:260.60px;font-size:12.6px;color:#333;white-space:nowrap;line-height:normal;">Товар</div>
<div style="position:absolute;left:861px;top:257px;width:1px;height:23px;background:#c3c7cc;"></div>
<div style="position:absolute;left:796px;top:260.60px;font-size:12.6px;color:#333;white-space:nowrap;line-height:normal;">Кол-во</div>
<div style="position:absolute;left:957px;top:257px;width:1px;height:23px;background:#c3c7cc;"></div>
<div style="position:absolute;left:866px;top:260.60px;font-size:12.6px;color:#333;white-space:nowrap;line-height:normal;">Планируемо...</div>
<svg style="position:absolute;left:778px;top:264px" width="8" height="5" viewBox="0 0 8 5"><path d="M0 5 L4 0.5 L8 5 Z" fill="#222"/></svg>
<div style="position:absolute;left:486px;top:280px;width:17px;height:21px;background:#f1f3f6;border-bottom:1px solid #b5bac1;border-right:1px solid #b5bac1;"></div>
<div style="position:absolute;left:503px;top:280px;width:455px;height:21px;background:linear-gradient(#eeeff2,#e6e7ea);border-bottom:1px solid #dfe2e6;"></div>
<div style="position:absolute;left:562px;top:280px;width:1px;height:21px;background:#dfe2e6;"></div>
<div style="position:absolute;left:791px;top:280px;width:1px;height:21px;background:#dfe2e6;"></div>
<div style="position:absolute;left:861px;top:280px;width:1px;height:21px;background:#dfe2e6;"></div>
<svg style="position:absolute;left:493px;top:287px" width="5" height="8" viewBox="0 0 5 8"><path d="M0.5 0.5 L4.5 4 L0.5 7.5 Z" fill="#6f747b"/></svg>
<div style="position:absolute;right:883px;top:284.10px;font-size:12.6px;color:#111;white-space:nowrap;line-height:normal;text-align:right;">1</div>
<div style="position:absolute;left:567px;top:284.10px;font-size:12.6px;color:#111;white-space:nowrap;line-height:normal;">Ватрушка с вишней 130</div>
<div style="position:absolute;right:583px;top:284.10px;font-size:12.6px;color:#111;white-space:nowrap;line-height:normal;text-align:right;">6</div>
<div style="position:absolute;left:967px;top:257px;width:105px;height:64px;background:linear-gradient(#fdfdfd,#f3f4f5 55%,#eaebed);border-left:1px solid #d3d6da;border-right:1px solid #d0d3d7;border-bottom:1px solid #b9bdc3;"></div>
<svg style="position:absolute;left:975px;top:272px" width="30" height="30" viewBox="0 0 30 30"><path d="M2 5 L5 1.5 H25 L28 5 V27 C28 28 27 29 26 29 H4 C3 29 2 28 2 27 Z" fill="#d39a55" stroke="#9a6428" stroke-width="1"/>
<line x1="2.5" y1="5.5" x2="27.5" y2="5.5" stroke="#f2cf9a" stroke-width="1"/>
<rect x="6" y="9" width="18" height="16" fill="#c58a45" stroke="#9a6428" stroke-width="0.8"/>
<defs><linearGradient id="gA" x1="0" y1="0" x2="0" y2="1"><stop offset="0" stop-color="#d8ec8a"/><stop offset="1" stop-color="#8cc22a"/></linearGradient></defs><path d="M11.5 12.3 H18.5 V17.8 H22 L15 24 L8.2 17.8 H11.5 Z" fill="url(#gA)" stroke="#4f8f16" stroke-width="0.9" stroke-linejoin="round"/>
<line x1="6.5" y1="24" x2="23.5" y2="24" stroke="#f3ddb8" stroke-width="1"/></svg>
<div style="position:absolute;left:1010px;top:281.01px;font-size:13.8px;color:#222;white-space:nowrap;line-height:normal;">Принять</div>
<div style="position:absolute;left:967px;top:324px;width:466px;height:23px;background:linear-gradient(#fafbfc,#f0f2f4);border-bottom:1px solid #b9bec4;"></div>
<div style="position:absolute;left:982px;top:325px;width:1px;height:22px;background:#c3c7cc;"></div>
<div style="position:absolute;left:1344px;top:325px;width:1px;height:22px;background:#c3c7cc;"></div>
<div style="position:absolute;left:987px;top:327.60px;font-size:12.6px;color:#333;white-space:nowrap;line-height:normal;">Товар</div>
<div style="position:absolute;left:1415px;top:325px;width:1px;height:22px;background:#c3c7cc;"></div>
<div style="position:absolute;left:1349px;top:327.60px;font-size:12.6px;color:#333;white-space:nowrap;line-height:normal;">Кол-во</div>
<svg style="position:absolute;left:1331px;top:332px" width="8" height="5" viewBox="0 0 8 5"><path d="M0 5 L4 0.5 L8 5 Z" fill="#222"/></svg>
<div style="position:absolute;left:967px;top:347px;width:16px;height:21px;background:#f1f3f6;border-bottom:1px solid #b5bac1;border-right:1px solid #b5bac1;"></div>
<div style="position:absolute;left:983px;top:347px;width:433px;height:21px;background:linear-gradient(#eeeff2,#e6e7ea);border-bottom:1px solid #dfe2e6;"></div>
<div style="position:absolute;left:1344px;top:347px;width:1px;height:21px;background:#dfe2e6;"></div>
<div style="position:absolute;left:987px;top:351.10px;font-size:12.6px;color:#111;white-space:nowrap;line-height:normal;">Перцы фаршированные</div>
<div style="position:absolute;right:28px;top:351.10px;font-size:12.6px;color:#111;white-space:nowrap;line-height:normal;text-align:right;">1250</div>
<svg style="position:absolute;left:973px;top:354px" width="5" height="8" viewBox="0 0 5 8"><path d="M0.5 0.5 L4.5 4 L0.5 7.5 Z" fill="#7a7f86"/></svg>
<div style="position:absolute;left:967px;top:368px;width:16px;height:21px;background:#f1f3f6;border-bottom:1px solid #b5bac1;border-right:1px solid #b5bac1;"></div>
<div style="position:absolute;left:983px;top:368px;width:433px;height:21px;background:#fff;border-bottom:1px solid #dfe2e6;"></div>
<div style="position:absolute;left:1344px;top:368px;width:1px;height:21px;background:#dfe2e6;"></div>
<div style="position:absolute;left:987px;top:372.10px;font-size:12.6px;color:#111;white-space:nowrap;line-height:normal;">Венгерка с творогом 120 гр</div>
<div style="position:absolute;right:28px;top:372.10px;font-size:12.6px;color:#111;white-space:nowrap;line-height:normal;text-align:right;">8</div>
<div style="position:absolute;left:967px;top:389px;width:16px;height:21px;background:#f1f3f6;border-bottom:1px solid #b5bac1;border-right:1px solid #b5bac1;"></div>
<div style="position:absolute;left:983px;top:389px;width:433px;height:21px;background:#fff;border-bottom:1px solid #dfe2e6;"></div>
<div style="position:absolute;left:1344px;top:389px;width:1px;height:21px;background:#dfe2e6;"></div>
<div style="position:absolute;left:987px;top:393.10px;font-size:12.6px;color:#111;white-space:nowrap;line-height:normal;">Язычок слоёный 60</div>
<div style="position:absolute;right:28px;top:393.10px;font-size:12.6px;color:#111;white-space:nowrap;line-height:normal;text-align:right;">6</div>
<div style="position:absolute;left:967px;top:410px;width:16px;height:21px;background:#f1f3f6;border-bottom:1px solid #b5bac1;border-right:1px solid #b5bac1;"></div>
<div style="position:absolute;left:983px;top:410px;width:433px;height:21px;background:#fff;border-bottom:1px solid #dfe2e6;"></div>
<div style="position:absolute;left:1344px;top:410px;width:1px;height:21px;background:#dfe2e6;"></div>
<div style="position:absolute;left:987px;top:414.10px;font-size:12.6px;color:#111;white-space:nowrap;line-height:normal;">Штрудель с вишней 70</div>
<div style="position:absolute;right:28px;top:414.10px;font-size:12.6px;color:#111;white-space:nowrap;line-height:normal;text-align:right;">9</div>
<div style="position:absolute;left:967px;top:431px;width:16px;height:21px;background:#f1f3f6;border-bottom:1px solid #b5bac1;border-right:1px solid #b5bac1;"></div>
<div style="position:absolute;left:983px;top:431px;width:433px;height:21px;background:#fff;border-bottom:1px solid #dfe2e6;"></div>
<div style="position:absolute;left:1344px;top:431px;width:1px;height:21px;background:#dfe2e6;"></div>
<div style="position:absolute;left:987px;top:435.10px;font-size:12.6px;color:#111;white-space:nowrap;line-height:normal;">Хлеб белый 310</div>
<div style="position:absolute;right:28px;top:435.10px;font-size:12.6px;color:#111;white-space:nowrap;line-height:normal;text-align:right;">3</div>
<div style="position:absolute;left:967px;top:452px;width:16px;height:21px;background:#f1f3f6;border-bottom:1px solid #b5bac1;border-right:1px solid #b5bac1;"></div>
<div style="position:absolute;left:983px;top:452px;width:433px;height:21px;background:#fff;border-bottom:1px solid #dfe2e6;"></div>
<div style="position:absolute;left:1344px;top:452px;width:1px;height:21px;background:#dfe2e6;"></div>
<div style="position:absolute;left:987px;top:456.10px;font-size:12.6px;color:#111;white-space:nowrap;line-height:normal;">Плюшка с сахаром 120</div>
<div style="position:absolute;right:28px;top:456.10px;font-size:12.6px;color:#111;white-space:nowrap;line-height:normal;text-align:right;">6</div>
<div style="position:absolute;left:967px;top:473px;width:16px;height:21px;background:#f1f3f6;border-bottom:1px solid #b5bac1;border-right:1px solid #b5bac1;"></div>
<div style="position:absolute;left:983px;top:473px;width:433px;height:21px;background:#fff;border-bottom:1px solid #dfe2e6;"></div>
<div style="position:absolute;left:1344px;top:473px;width:1px;height:21px;background:#dfe2e6;"></div>
<div style="position:absolute;left:987px;top:477.10px;font-size:12.6px;color:#111;white-space:nowrap;line-height:normal;">Пирожок с яблоком 120</div>
<div style="position:absolute;right:28px;top:477.10px;font-size:12.6px;color:#111;white-space:nowrap;line-height:normal;text-align:right;">10</div>
<div style="position:absolute;left:967px;top:494px;width:16px;height:21px;background:#f1f3f6;border-bottom:1px solid #b5bac1;border-right:1px solid #b5bac1;"></div>
<div style="position:absolute;left:983px;top:494px;width:433px;height:21px;background:#fff;border-bottom:1px solid #dfe2e6;"></div>
<div style="position:absolute;left:1344px;top:494px;width:1px;height:21px;background:#dfe2e6;"></div>
<div style="position:absolute;left:987px;top:498.10px;font-size:12.6px;color:#111;white-space:nowrap;line-height:normal;">Чебурек с мясом 155</div>
<div style="position:absolute;right:28px;top:498.10px;font-size:12.6px;color:#111;white-space:nowrap;line-height:normal;text-align:right;">13</div>
<div style="position:absolute;left:967px;top:515px;width:16px;height:21px;background:#f1f3f6;border-bottom:1px solid #b5bac1;border-right:1px solid #b5bac1;"></div>
<div style="position:absolute;left:983px;top:515px;width:433px;height:21px;background:#fff;border-bottom:1px solid #dfe2e6;"></div>
<div style="position:absolute;left:1344px;top:515px;width:1px;height:21px;background:#dfe2e6;"></div>
<div style="position:absolute;left:987px;top:519.10px;font-size:12.6px;color:#111;white-space:nowrap;line-height:normal;">Синнабон 150</div>
<div style="position:absolute;right:28px;top:519.10px;font-size:12.6px;color:#111;white-space:nowrap;line-height:normal;text-align:right;">5</div>
<div style="position:absolute;left:967px;top:536px;width:16px;height:21px;background:#f1f3f6;border-bottom:1px solid #b5bac1;border-right:1px solid #b5bac1;"></div>
<div style="position:absolute;left:983px;top:536px;width:433px;height:21px;background:#fff;border-bottom:1px solid #dfe2e6;"></div>
<div style="position:absolute;left:1344px;top:536px;width:1px;height:21px;background:#dfe2e6;"></div>
<div style="position:absolute;left:987px;top:540.10px;font-size:12.6px;color:#111;white-space:nowrap;line-height:normal;">Курник 125</div>
<div style="position:absolute;right:28px;top:540.10px;font-size:12.6px;color:#111;white-space:nowrap;line-height:normal;text-align:right;">10</div>
<div style="position:absolute;left:967px;top:557px;width:16px;height:21px;background:#f1f3f6;border-bottom:1px solid #b5bac1;border-right:1px solid #b5bac1;"></div>
<div style="position:absolute;left:983px;top:557px;width:433px;height:21px;background:#fff;border-bottom:1px solid #dfe2e6;"></div>
<div style="position:absolute;left:1344px;top:557px;width:1px;height:21px;background:#dfe2e6;"></div>
<div style="position:absolute;left:987px;top:561.10px;font-size:12.6px;color:#111;white-space:nowrap;line-height:normal;">Багет 380</div>
<div style="position:absolute;right:28px;top:561.10px;font-size:12.6px;color:#111;white-space:nowrap;line-height:normal;text-align:right;">2</div>
<div style="position:absolute;left:967px;top:578px;width:16px;height:21px;background:#f1f3f6;border-bottom:1px solid #b5bac1;border-right:1px solid #b5bac1;"></div>
<div style="position:absolute;left:983px;top:578px;width:433px;height:21px;background:#fff;border-bottom:1px solid #dfe2e6;"></div>
<div style="position:absolute;left:1344px;top:578px;width:1px;height:21px;background:#dfe2e6;"></div>
<div style="position:absolute;left:987px;top:582.10px;font-size:12.6px;color:#111;white-space:nowrap;line-height:normal;">Хлеб бездрожжевой 470гр</div>
<div style="position:absolute;right:28px;top:582.10px;font-size:12.6px;color:#111;white-space:nowrap;line-height:normal;text-align:right;">3</div>
<div style="position:absolute;left:967px;top:599px;width:16px;height:21px;background:#f1f3f6;border-bottom:1px solid #b5bac1;border-right:1px solid #b5bac1;"></div>
<div style="position:absolute;left:983px;top:599px;width:433px;height:21px;background:#fff;border-bottom:1px solid #dfe2e6;"></div>
<div style="position:absolute;left:1344px;top:599px;width:1px;height:21px;background:#dfe2e6;"></div>
<div style="position:absolute;left:987px;top:603.10px;font-size:12.6px;color:#111;white-space:nowrap;line-height:normal;">Пирожок с вишней 120</div>
<div style="position:absolute;right:28px;top:603.10px;font-size:12.6px;color:#111;white-space:nowrap;line-height:normal;text-align:right;">10</div>
<div style="position:absolute;left:967px;top:620px;width:16px;height:21px;background:#f1f3f6;border-bottom:1px solid #b5bac1;border-right:1px solid #b5bac1;"></div>
<div style="position:absolute;left:983px;top:620px;width:433px;height:21px;background:#fff;border-bottom:1px solid #dfe2e6;"></div>
<div style="position:absolute;left:1344px;top:620px;width:1px;height:21px;background:#dfe2e6;"></div>
<div style="position:absolute;left:987px;top:624.10px;font-size:12.6px;color:#111;white-space:nowrap;line-height:normal;">Улитка с творогом и изюмом 120</div>
<div style="position:absolute;right:28px;top:624.10px;font-size:12.6px;color:#111;white-space:nowrap;line-height:normal;text-align:right;">7</div>
<div style="position:absolute;left:967px;top:641px;width:16px;height:21px;background:#f1f3f6;border-bottom:1px solid #b5bac1;border-right:1px solid #b5bac1;"></div>
<div style="position:absolute;left:983px;top:641px;width:433px;height:21px;background:#fff;border-bottom:1px solid #dfe2e6;"></div>
<div style="position:absolute;left:1344px;top:641px;width:1px;height:21px;background:#dfe2e6;"></div>
<div style="position:absolute;left:987px;top:645.10px;font-size:12.6px;color:#111;white-space:nowrap;line-height:normal;">Пирожок с мясом 115</div>
<div style="position:absolute;right:28px;top:645.10px;font-size:12.6px;color:#111;white-space:nowrap;line-height:normal;text-align:right;">10</div>
<div style="position:absolute;left:967px;top:662px;width:16px;height:21px;background:#f1f3f6;border-bottom:1px solid #b5bac1;border-right:1px solid #b5bac1;"></div>
<div style="position:absolute;left:983px;top:662px;width:433px;height:21px;background:#fff;border-bottom:1px solid #dfe2e6;"></div>
<div style="position:absolute;left:1344px;top:662px;width:1px;height:21px;background:#dfe2e6;"></div>
<div style="position:absolute;left:987px;top:666.10px;font-size:12.6px;color:#111;white-space:nowrap;line-height:normal;">Плюшка с корицей 120</div>
<div style="position:absolute;right:28px;top:666.10px;font-size:12.6px;color:#111;white-space:nowrap;line-height:normal;text-align:right;">6</div>
<div style="position:absolute;left:967px;top:683px;width:16px;height:21px;background:#f1f3f6;border-bottom:1px solid #b5bac1;border-right:1px solid #b5bac1;"></div>
<div style="position:absolute;left:983px;top:683px;width:433px;height:21px;background:#fff;border-bottom:1px solid #dfe2e6;"></div>
<div style="position:absolute;left:1344px;top:683px;width:1px;height:21px;background:#dfe2e6;"></div>
<div style="position:absolute;left:987px;top:687.10px;font-size:12.6px;color:#111;white-space:nowrap;line-height:normal;">Ватрушка с творогом 120</div>
<div style="position:absolute;right:28px;top:687.10px;font-size:12.6px;color:#111;white-space:nowrap;line-height:normal;text-align:right;">10</div>
<div style="position:absolute;left:967px;top:704px;width:16px;height:21px;background:#f1f3f6;border-bottom:1px solid #b5bac1;border-right:1px solid #b5bac1;"></div>
<div style="position:absolute;left:983px;top:704px;width:433px;height:21px;background:#fff;border-bottom:1px solid #dfe2e6;"></div>
<div style="position:absolute;left:1344px;top:704px;width:1px;height:21px;background:#dfe2e6;"></div>
<div style="position:absolute;left:987px;top:708.10px;font-size:12.6px;color:#111;white-space:nowrap;line-height:normal;">Багет 180</div>
<div style="position:absolute;right:28px;top:708.10px;font-size:12.6px;color:#111;white-space:nowrap;line-height:normal;text-align:right;">6</div>
<div style="position:absolute;left:967px;top:725px;width:16px;height:21px;background:#f1f3f6;border-bottom:1px solid #b5bac1;border-right:1px solid #b5bac1;"></div>
<div style="position:absolute;left:983px;top:725px;width:433px;height:21px;background:#fff;border-bottom:1px solid #dfe2e6;"></div>
<div style="position:absolute;left:1344px;top:725px;width:1px;height:21px;background:#dfe2e6;"></div>
<div style="position:absolute;left:987px;top:729.10px;font-size:12.6px;color:#111;white-space:nowrap;line-height:normal;">Сосиска с сыром и зеленью 140</div>
<div style="position:absolute;right:28px;top:729.10px;font-size:12.6px;color:#111;white-space:nowrap;line-height:normal;text-align:right;">10</div>
<div style="position:absolute;left:967px;top:746px;width:16px;height:21px;background:#f1f3f6;border-bottom:1px solid #b5bac1;border-right:1px solid #b5bac1;"></div>
<div style="position:absolute;left:983px;top:746px;width:433px;height:21px;background:#fff;border-bottom:1px solid #dfe2e6;"></div>
<div style="position:absolute;left:1344px;top:746px;width:1px;height:21px;background:#dfe2e6;"></div>
<div style="position:absolute;left:987px;top:750.10px;font-size:12.6px;color:#111;white-space:nowrap;line-height:normal;">Вертута с творогом 180</div>
<div style="position:absolute;right:28px;top:750.10px;font-size:12.6px;color:#111;white-space:nowrap;line-height:normal;text-align:right;">3</div>
<div style="position:absolute;left:967px;top:767px;width:16px;height:21px;background:#f1f3f6;border-bottom:1px solid #b5bac1;border-right:1px solid #b5bac1;"></div>
<div style="position:absolute;left:983px;top:767px;width:433px;height:21px;background:#fff;border-bottom:1px solid #dfe2e6;"></div>
<div style="position:absolute;left:1344px;top:767px;width:1px;height:21px;background:#dfe2e6;"></div>
<div style="position:absolute;left:987px;top:771.10px;font-size:12.6px;color:#111;white-space:nowrap;line-height:normal;">Пирожок с луком и яйцом 115</div>
<div style="position:absolute;right:28px;top:771.10px;font-size:12.6px;color:#111;white-space:nowrap;line-height:normal;text-align:right;">16</div>
<div style="position:absolute;left:967px;top:788px;width:16px;height:21px;background:#f1f3f6;border-bottom:1px solid #b5bac1;border-right:1px solid #b5bac1;"></div>
<div style="position:absolute;left:983px;top:788px;width:433px;height:21px;background:#fff;border-bottom:1px solid #dfe2e6;"></div>
<div style="position:absolute;left:1344px;top:788px;width:1px;height:21px;background:#dfe2e6;"></div>
<div style="position:absolute;left:987px;top:792.10px;font-size:12.6px;color:#111;white-space:nowrap;line-height:normal;">Хачапури Аджарский 255</div>
<div style="position:absolute;right:28px;top:792.10px;font-size:12.6px;color:#111;white-space:nowrap;line-height:normal;text-align:right;">2</div>
<div style="position:absolute;left:967px;top:809px;width:16px;height:18px;background:#f1f3f6;border-bottom:1px solid #b5bac1;border-right:1px solid #b5bac1;"></div>
<div style="position:absolute;left:983px;top:809px;width:433px;height:18px;background:#fff;border-bottom:1px solid #dfe2e6;"></div>
<div style="position:absolute;left:1344px;top:809px;width:1px;height:18px;background:#dfe2e6;"></div>
<div style="position:absolute;left:987px;top:813.10px;font-size:12.6px;color:#111;white-space:nowrap;line-height:normal;">Крыжовник морс 1л</div>
<div style="position:absolute;right:28px;top:813.10px;font-size:12.6px;color:#111;white-space:nowrap;line-height:normal;text-align:right;">3</div>
<div style="position:absolute;left:1416px;top:347px;width:17px;height:480px;background:linear-gradient(90deg,#f4f5f7,#fbfbfc);"></div>
<svg style="position:absolute;left:1418px;top:352px" width="11" height="6" viewBox="0 0 11 6"><path d="M0.5 5.5 L5.5 0.5 L10.5 5.5 Z" fill="#5d6268"/></svg>
<svg style="position:absolute;left:1418px;top:815px" width="11" height="6" viewBox="0 0 11 6"><path d="M0.5 0.5 L5.5 5.5 L10.5 0.5 Z" fill="#5d6268"/></svg>
<div style="position:absolute;left:1416px;top:364px;width:15px;height:172px;background:linear-gradient(90deg,#eaecef,#f6f7f8 50%,#e5e8eb);border:1px solid #aeb3b9;border-radius:2px;"></div>
<svg style="position:absolute;left:1419px;top:445px" width="9" height="9" viewBox="0 0 9 9"><g stroke="#6b7076" stroke-width="1"><line x1="1" y1="1.5" x2="8" y2="1.5"/><line x1="1" y1="3.5" x2="8" y2="3.5"/><line x1="1" y1="5.5" x2="8" y2="5.5"/><line x1="1" y1="7.5" x2="8" y2="7.5"/></g></svg>
<svg style="position:absolute;left:481px;top:525px" width="3" height="15" viewBox="0 0 3 15"><g fill="#8a9096"><rect x="0.5" y="0" width="2" height="2"/><rect x="0.5" y="4" width="2" height="2"/><rect x="0.5" y="8" width="2" height="2"/><rect x="0.5" y="12" width="2" height="2"/></g></svg>
<svg style="position:absolute;left:961px;top:525px" width="3" height="15" viewBox="0 0 3 15"><g fill="#8a9096"><rect x="0.5" y="0" width="2" height="2"/><rect x="0.5" y="4" width="2" height="2"/><rect x="0.5" y="8" width="2" height="2"/><rect x="0.5" y="12" width="2" height="2"/></g></svg>
<div style="position:absolute;left:1028px;top:757.17px;font-size:19.7px;color:rgba(110,110,110,0.38);white-space:nowrap;line-height:normal;">Активация Windows</div>
<div style="position:absolute;left:1028px;top:782.52px;font-size:14.9px;color:rgba(110,110,110,0.38);white-space:nowrap;line-height:normal;">Чтобы активировать Windows, перейдите в раздел</div>
<div style="position:absolute;left:1028px;top:802.02px;font-size:14.9px;color:rgba(110,110,110,0.38);white-space:nowrap;line-height:normal;">&quot;Параметры&quot;.</div>
<div style="position:absolute;left:0px;top:829px;width:1440px;height:6px;background:linear-gradient(#eceef0,#e2e4e7);"></div>
<div style="position:absolute;left:0px;top:835px;width:1440px;height:1px;background:#a9aeb5;"></div>
<div style="position:absolute;left:0px;top:836px;width:1440px;height:24px;background:linear-gradient(#f4f5f6,#e9ebed 40%,#d6d9dd);"></div>
<div style="position:absolute;left:0px;top:860px;width:1440px;height:1px;background:#000;"></div>
<div style="position:absolute;left:6px;top:842.04px;font-size:11px;color:#3b4352;white-space:nowrap;line-height:normal;">Окна</div>
<svg style="position:absolute;left:36px;top:847px" width="6" height="4" viewBox="0 0 6 4"><path d="M0 0 H6 L3 3.5 Z" fill="#777"/></svg>
<div style="position:absolute;left:1382px;top:839px;width:1px;height:18px;background:linear-gradient(rgba(120,125,130,0),#7a7f85 50%,rgba(120,125,130,0));"></div>
<svg style="position:absolute;left:1391px;top:843px" width="16" height="11" viewBox="0 0 16 11"><rect x="0.5" y="0.5" width="15" height="10" rx="1.5" fill="#fdfdfd" stroke="#9aa0a6"/><path d="M1.5 1.5 L8 6 L14.5 1.5 M1.5 9.5 L6 5 M14.5 9.5 L10 5" stroke="#a9c4e0" stroke-width="0.8" fill="none"/></svg>
<svg style="position:absolute;left:1418px;top:842px" width="15" height="13" viewBox="0 0 15 13"><defs><linearGradient id="wg" x1="0" y1="0" x2="0" y2="1"><stop offset="0" stop-color="#fbd97a"/><stop offset="1" stop-color="#f3b52e"/></linearGradient></defs><path d="M7.5 0.6 L14.3 12.2 H0.7 Z" fill="url(#wg)" stroke="#d98f22" stroke-width="0.8" stroke-linejoin="round"/><rect x="6.9" y="3.8" width="1.3" height="5" fill="#fff"/><rect x="6.9" y="9.8" width="1.3" height="1.3" fill="#fff"/></svg>
</body></html>
